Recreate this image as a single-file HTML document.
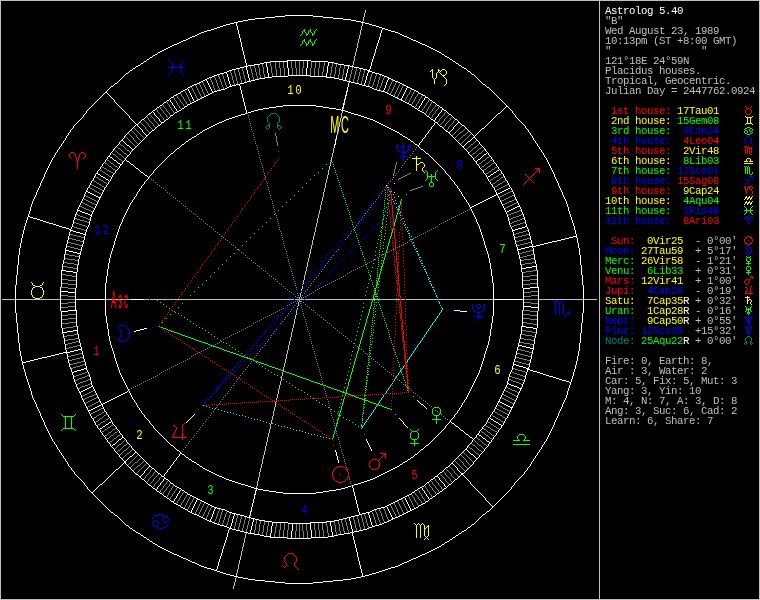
<!DOCTYPE html>
<html lang="en">
<head>
<meta charset="utf-8">
<title>Astrolog 5.40 chart</title>
<style>
html,body{margin:0;padding:0;background:#000;}
#chart{position:relative;width:760px;height:600px;background:#000;overflow:hidden;}
#chart svg{position:absolute;left:0;top:0;display:block;will-change:transform;}
#art path{fill:none;stroke-width:1;shape-rendering:crispEdges;}
.wt{font-family:"Liberation Mono",monospace;}
.hn{font-size:12.5px;letter-spacing:1.8px;text-anchor:middle;}
.ax{font-family:"Liberation Sans",sans-serif;font-size:24.7px;text-anchor:middle;}
#side{position:absolute;left:605px;top:0;width:155px;height:600px;will-change:transform;font-family:"Liberation Mono",monospace;font-size:10.75px;letter-spacing:-0.45px;font-weight:normal;color:#bfbfbf;}
#side div{position:absolute;left:0;height:10px;line-height:10px;white-space:pre;transform-origin:0 0;transform:scale(1,1);}
.c-maroon{color:#7f0000;fill:#7f0000;}
.c-dkgreen{color:#007f00;fill:#007f00;}
.c-orange{color:#7f7f00;fill:#7f7f00;}
.c-dkblue{color:#00007f;fill:#00007f;}
.c-purple{color:#7f007f;fill:#7f007f;}
.c-dkcyan{color:#007f7f;fill:#007f7f;}
.c-ltgray{color:#bfbfbf;fill:#bfbfbf;}
.c-gray{color:#7f7f7f;fill:#7f7f7f;}
.c-red{color:#ff0000;fill:#ff0000;}
.c-green{color:#00ff00;fill:#00ff00;}
.c-yellow{color:#ffff00;fill:#ffff00;}
.c-blue{color:#0000ff;fill:#0000ff;}
.c-magenta{color:#ff00ff;fill:#ff00ff;}
.c-cyan{color:#00ffff;fill:#00ffff;}
.c-white{color:#ffffff;fill:#ffffff;}
</style>
</head>
<body>
<div id="chart">
<svg id="art" width="760" height="600" viewBox="0 0 760 600">
<path transform="translate(0,.5)" stroke="#007f7f" d="M271 113h5M270 114h1M276 114h1M269 115h1M277 115h1M268 116h1M278 116h1M268 122h1M278 122h1M267 125h2M278 125h2M266 126h1M280 126h1M265 127h1M281 127h1M266 128h1M268 128h1M278 128h1M280 128h1M267 129h1M279 129h1M278 151h1M747 336h3M746 337h1M750 337h1M745 342h1M751 342h1M744 343h1M752 343h1M745 344h1M751 344h1"/>
<path transform="translate(.5,0)" stroke="#007f7f" d="M267 117v5M269 123v5M277 123v5M279 117v5M745 338v3M746 341v3M750 341v3M751 338v3"/>
<path transform="translate(0,.5)" stroke="#bfbfbf" d="M1 0h598M600 0h159M362 21h1M352 65h1M347 91h1M346 95h1M345 99h1M344 103h1M344 104h1M343 107h1M343 108h1M342 111h1M342 112h1M336 135h1M336 139h1M334 144h1M331 161h1M302 284h1M301 289h1M301 290h1M301 292h1M299 297h1M299 298h1M2 299h13M16 299h44M106 299h25M144 299h5M150 299h36M187 299h107M295 299h4M300 299h4M305 299h59M365 299h7M373 299h4M378 299h22M401 299h4M406 299h31M439 299h54M539 299h44M584 299h13M299 300h1M299 301h1M297 306h1M297 308h1M297 309h1M276 398h1M276 399h1M276 401h1M256 486h1M256 487h1M255 490h1M254 494h1M251 511h1M250 515h1M246 533h1M236 577h1M1 599h598M600 599h159"/>
<path transform="translate(.5,0)" stroke="#bfbfbf" d="M0 0v600M233 586v3M234 582v4M235 578v4M236 573v3M237 569v4M238 564v5M239 560v4M240 556v4M241 551v5M242 547v4M243 543v4M244 538v5M245 534v4M257 481v5M258 477v4M259 472v5M260 468v4M261 464v4M262 459v5M263 455v4M264 451v4M265 446v5M266 442v4M267 437v5M268 433v4M269 429v4M270 424v5M271 420v4M272 416v4M273 411v5M274 407v4M275 402v5M277 394v4M278 389v5M279 385v4M280 381v4M281 376v5M282 372v4M283 367v4M284 363v4M285 359v4M286 354v5M287 350v4M288 345v5M289 341v4M290 337v4M291 332v5M292 328v4M293 324v4M294 319v5M295 315v4M296 310v5M298 302v4M300 293v4M302 286v3M303 280v4M304 275v5M305 271v4M306 267v4M307 262v5M308 258v4M309 254v4M310 249v5M311 245v4M312 240v5M313 236v4M314 232v4M315 227v5M316 223v4M317 218v5M318 214v4M319 210v4M320 205v5M321 201v4M322 197v4M323 192v5M324 188v4M325 183v5M326 179v4M327 175v4M328 170v5M329 166v4M330 162v4M331 157v3M332 154v3M333 148v5M337 131v4M338 127v4M339 122v5M340 118v4M341 113v5M353 61v4M354 56v5M355 52v4M356 48v4M357 43v5M358 39v4M359 35v4M360 30v5M361 26v4M362 23v3M363 17v4M364 13v4M365 10v3M599 0v600M759 0v600"/>
<path transform="translate(0,.5)" stroke="#7f7f7f" d="M230 71h1M230 72h1M372 73h1M222 74h1M376 74h1M218 75h1M222 75h1M376 75h1M380 75h1M214 76h1M218 76h1M380 76h1M214 77h1M219 77h1M384 77h1M210 78h1M215 78h1M219 78h1M383 78h1M210 79h1M215 79h1M383 79h1M211 80h1M392 80h1M211 81h1M392 81h1M202 82h1M391 82h1M396 82h1M199 83h1M203 83h1M234 83h1M391 83h1M395 83h1M199 84h1M203 84h1M234 84h1M368 84h1M390 84h1M395 84h1M399 84h1M195 85h1M200 85h1M204 85h1M222 85h1M226 85h1M368 85h1M372 85h1M390 85h1M394 85h1M399 85h1M403 85h1M196 86h1M200 86h1M204 86h1M218 86h1M222 86h1M226 86h1M372 86h1M380 86h1M394 86h1M398 86h1M402 86h1M191 87h1M196 87h1M201 87h1M205 87h1M218 87h1M223 87h1M376 87h1M380 87h1M393 87h1M398 87h1M402 87h1M192 88h1M197 88h1M201 88h1M205 88h1M214 88h1M219 88h1M223 88h1M376 88h1M379 88h1M393 88h1M397 88h1M401 88h1M192 89h1M197 89h1M206 89h1M214 89h1M219 89h1M379 89h1M388 89h1M392 89h1M397 89h1M401 89h1M411 89h1M193 90h1M198 90h1M206 90h1M215 90h1M388 90h1M392 90h1M396 90h1M400 90h1M410 90h1M185 91h1M193 91h1M198 91h1M207 91h1M387 91h1M391 91h1M396 91h1M400 91h1M410 91h1M414 91h1M185 92h1M194 92h1M199 92h1M203 92h1M207 92h1M387 92h1M391 92h1M395 92h1M399 92h1M409 92h1M413 92h1M180 93h1M186 93h1M194 93h1M199 93h1M203 93h1M208 93h1M390 93h1M395 93h1M399 93h1M409 93h1M413 93h1M418 93h1M181 94h1M186 94h1M195 94h1M200 94h1M204 94h1M394 94h1M398 94h1M408 94h1M412 94h1M417 94h1M176 95h1M181 95h1M187 95h1M195 95h1M200 95h1M204 95h1M394 95h1M398 95h1M407 95h1M412 95h1M417 95h1M422 95h1M177 96h1M182 96h1M187 96h1M196 96h1M201 96h1M397 96h1M407 96h1M411 96h1M416 96h1M421 96h1M173 97h1M177 97h1M183 97h1M188 97h1M196 97h1M201 97h1M397 97h1M406 97h1M411 97h1M415 97h1M421 97h1M174 98h1M178 98h1M183 98h1M188 98h1M197 98h1M406 98h1M410 98h1M415 98h1M420 98h1M174 99h1M179 99h1M184 99h1M189 99h1M197 99h1M405 99h1M410 99h1M414 99h1M419 99h1M175 100h1M180 100h1M184 100h1M189 100h1M405 100h1M409 100h1M414 100h1M419 100h1M428 100h1M176 101h1M180 101h1M185 101h1M190 101h1M409 101h1M413 101h1M418 101h1M428 101h1M167 102h1M176 102h1M181 102h1M186 102h1M190 102h1M408 102h1M412 102h1M418 102h1M427 102h1M431 102h1M167 103h1M177 103h1M182 103h1M186 103h1M412 103h1M417 103h1M426 103h1M431 103h1M168 104h1M177 104h1M183 104h1M187 104h1M411 104h1M416 104h1M426 104h1M430 104h1M163 105h1M169 105h1M178 105h1M183 105h1M416 105h1M425 105h1M430 105h1M435 105h1M163 106h1M169 106h1M179 106h1M184 106h1M415 106h1M424 106h1M429 106h1M435 106h1M160 107h1M164 107h1M170 107h1M179 107h1M424 107h1M428 107h1M434 107h1M438 107h1M160 108h1M165 108h1M171 108h1M180 108h1M423 108h1M428 108h1M433 108h1M438 108h1M156 109h1M161 109h1M166 109h1M171 109h1M422 109h1M427 109h1M432 109h1M437 109h1M157 110h1M162 110h1M166 110h1M172 110h1M422 110h1M427 110h1M432 110h1M436 110h1M157 111h1M163 111h1M167 111h1M173 111h1M426 111h1M431 111h1M435 111h1M158 112h1M163 112h1M168 112h1M173 112h1M426 112h1M430 112h1M435 112h1M445 112h1M159 113h1M164 113h1M169 113h1M247 113h1M425 113h1M429 113h1M434 113h1M444 113h1M149 114h1M160 114h1M165 114h1M169 114h1M429 114h1M433 114h1M444 114h1M150 115h1M160 115h1M166 115h1M170 115h1M248 115h1M428 115h1M432 115h1M443 115h1M448 115h1M151 116h1M161 116h1M166 116h1M432 116h1M442 116h1M447 116h1M147 117h1M152 117h1M162 117h1M167 117h1M248 117h1M431 117h1M441 117h1M446 117h1M451 117h1M148 118h1M153 118h1M163 118h1M440 118h1M445 118h1M450 118h1M148 119h1M154 119h1M163 119h1M249 119h1M439 119h1M444 119h1M450 119h1M144 120h1M149 120h1M154 120h1M164 120h1M439 120h1M444 120h1M449 120h1M454 120h1M145 121h1M150 121h1M155 121h1M249 121h1M438 121h1M443 121h1M448 121h1M453 121h1M140 122h1M146 122h1M151 122h1M156 122h1M437 122h1M442 122h1M447 122h1M453 122h1M141 123h1M147 123h1M152 123h1M157 123h1M250 123h1M441 123h1M446 123h1M452 123h1M142 124h1M148 124h1M153 124h1M158 124h1M440 124h1M445 124h1M451 124h1M143 125h1M148 125h1M153 125h1M250 125h1M445 125h1M450 125h1M144 126h1M149 126h1M154 126h1M444 126h1M449 126h1M461 126h1M145 127h1M150 127h1M155 127h1M251 127h1M443 127h1M448 127h1M460 127h1M134 128h1M145 128h1M151 128h1M448 128h1M459 128h1M465 128h1M135 129h1M146 129h1M152 129h1M251 129h1M447 129h1M458 129h1M464 129h1M131 130h1M136 130h1M147 130h1M446 130h1M457 130h1M463 130h1M132 131h1M137 131h1M148 131h1M252 131h1M456 131h1M462 131h1M468 131h1M133 132h1M138 132h1M149 132h1M455 132h1M460 132h2M467 132h1M128 133h1M134 133h1M139 133h1M253 133h1M454 133h1M459 133h1M466 133h1M129 134h1M135 134h1M140 134h1M453 134h1M458 134h1M465 134h1M470 134h1M130 135h1M136 135h1M141 135h1M253 135h1M452 135h1M457 135h1M463 135h2M469 135h1M125 136h1M131 136h1M136 136h1M142 136h1M456 136h1M462 136h1M468 136h1M126 137h1M132 137h1M137 137h1M143 137h1M254 137h1M455 137h1M461 137h1M467 137h1M127 138h1M133 138h1M138 138h1M460 138h1M466 138h1M128 139h1M133 139h1M139 139h1M254 139h1M459 139h1M465 139h1M129 140h1M134 140h1M140 140h1M458 140h1M464 140h1M476 140h1M130 141h1M135 141h1M255 141h1M463 141h1M475 141h1M131 142h1M136 142h1M462 142h1M474 142h1M132 143h1M137 143h1M255 143h1M461 143h1M473 143h1M120 144h1M133 144h1M471 144h2M478 144h1M121 145h2M134 145h1M256 145h1M470 145h1M477 145h1M123 146h1M135 146h1M469 146h1M476 146h1M117 147h1M124 147h1M257 147h1M416 147h1M468 147h1M474 147h2M481 147h1M118 148h2M125 148h1M467 148h1M473 148h1M479 148h2M114 149h1M120 149h1M126 149h1M257 149h1M415 149h1M466 149h1M472 149h1M478 149h1M484 149h1M115 150h1M121 150h1M127 150h2M471 150h1M477 150h1M483 150h1M116 151h1M122 151h1M129 151h1M258 151h1M413 151h1M470 151h1M476 151h1M482 151h1M117 152h1M123 152h1M469 152h1M475 152h1M481 152h1M112 153h1M118 153h1M124 153h2M258 153h1M412 153h1M473 153h2M479 153h2M113 154h2M119 154h2M126 154h1M472 154h1M478 154h1M115 155h1M121 155h1M127 155h1M259 155h1M410 155h1M471 155h1M477 155h1M116 156h1M122 156h1M476 156h1M489 156h1M117 157h1M123 157h1M259 157h1M409 157h1M475 157h1M487 157h2M118 158h1M124 158h1M474 158h1M486 158h1M119 159h2M260 159h1M407 159h1M485 159h1M107 160h2M121 160h1M483 160h2M490 160h2M109 161h1M122 161h1M260 161h1M405 161h1M482 161h1M489 161h1M110 162h1M481 162h1M488 162h1M105 163h2M111 163h2M261 163h1M404 163h1M479 163h2M486 163h2M492 163h2M107 164h1M113 164h1M478 164h1M485 164h1M491 164h1M108 165h1M114 165h1M262 165h1M402 165h1M484 165h1M490 165h1M109 166h2M115 166h2M482 166h2M488 166h2M102 167h2M111 167h1M117 167h1M262 167h1M401 167h1M481 167h1M487 167h1M495 167h2M104 168h2M112 168h1M486 168h1M494 168h1M106 169h1M113 169h2M263 169h1M399 169h1M484 169h2M492 169h2M100 170h2M107 170h2M115 170h1M483 170h1M491 170h1M102 171h1M109 171h2M263 171h1M398 171h1M489 171h2M103 172h2M111 172h2M488 172h1M105 173h1M113 173h1M264 173h1M396 173h1M409 173h2M486 173h2M501 173h1M106 174h2M407 174h2M499 174h2M108 175h1M264 175h1M395 175h1M405 175h2M498 175h1M95 176h1M109 176h2M403 176h2M496 176h2M503 176h1M96 177h2M149 177h1M265 177h1M393 177h1M401 177h2M494 177h2M501 177h2M98 178h1M399 178h2M493 178h1M500 178h1M99 179h2M151 179h1M265 179h1M392 179h1M398 179h1M491 179h2M499 179h1M93 180h1M101 180h2M153 180h1M490 180h1M497 180h2M505 180h1M94 181h2M103 181h1M266 181h1M390 181h1M496 181h1M503 181h2M96 182h1M104 182h2M155 182h1M495 182h1M502 182h1M97 183h2M106 183h1M267 183h1M388 183h1M493 183h2M500 183h2M91 184h1M99 184h2M157 184h1M492 184h1M498 184h2M507 184h1M92 185h2M101 185h1M159 185h1M267 185h1M387 185h1M497 185h1M505 185h2M94 186h2M102 186h2M421 186h2M495 186h2M503 186h2M89 187h1M96 187h2M104 187h1M161 187h1M268 187h1M385 187h1M418 187h3M494 187h1M501 187h2M90 188h2M98 188h2M163 188h1M415 188h3M499 188h2M92 189h2M100 189h2M268 189h1M384 189h1M412 189h3M497 189h2M94 190h1M102 190h1M165 190h1M410 190h2M496 190h1M95 191h2M269 191h1M382 191h1M510 191h2M97 192h2M167 192h1M508 192h2M99 193h2M169 193h1M269 193h1M381 193h1M506 193h2M504 194h2M85 195h1M171 195h1M270 195h1M379 195h1M502 195h2M512 195h2M86 196h2M500 196h2M510 196h2M88 197h2M173 197h1M270 197h1M378 197h1M499 197h1M508 197h2M90 198h2M175 198h1M506 198h2M84 199h2M92 199h2M271 199h1M376 199h1M504 199h2M514 199h2M86 200h2M94 200h2M177 200h1M502 200h2M512 200h2M88 201h2M96 201h2M179 201h1M272 201h1M375 201h1M501 201h1M509 201h3M82 202h1M90 202h2M507 202h2M516 202h1M83 203h2M92 203h2M181 203h1M272 203h1M373 203h1M505 203h2M514 203h2M85 204h2M94 204h2M503 204h2M512 204h2M87 205h2M183 205h1M273 205h1M371 205h1M510 205h2M80 206h2M89 206h2M185 206h1M508 206h2M82 207h2M91 207h2M273 207h1M370 207h1M506 207h2M84 208h2M93 208h1M187 208h1M505 208h1M86 209h3M274 209h1M368 209h1M469 209h1M89 210h2M189 210h1M467 210h1M519 210h2M91 211h2M191 211h1M274 211h1M367 211h1M465 211h1M517 211h2M463 212h1M514 212h3M193 213h1M275 213h1M365 213h1M461 213h1M511 213h3M76 214h2M195 214h1M459 214h1M509 214h2M521 214h2M78 215h2M276 215h1M364 215h1M457 215h1M508 215h1M519 215h2M80 216h3M197 216h1M455 216h1M516 216h3M83 217h3M276 217h1M362 217h1M453 217h1M513 217h3M75 218h2M86 218h2M199 218h1M451 218h1M511 218h2M522 218h2M77 219h3M88 219h2M201 219h1M277 219h1M361 219h1M449 219h1M509 219h2M520 219h2M80 220h4M447 220h1M517 220h3M84 221h3M203 221h1M277 221h1M359 221h1M445 221h1M514 221h3M74 222h2M87 222h2M443 222h1M512 222h2M523 222h2M76 223h3M205 223h1M278 223h1M358 223h1M441 223h1M510 223h2M520 223h3M79 224h3M207 224h1M439 224h1M517 224h3M82 225h3M278 225h1M356 225h1M514 225h3M73 226h1M85 226h2M209 226h1M437 226h1M512 226h2M74 227h3M211 227h1M279 227h1M355 227h1M435 227h1M77 228h4M433 228h1M81 229h3M213 229h1M279 229h1M353 229h1M431 229h1M84 230h2M429 230h1M526 230h2M215 231h1M280 231h1M351 231h1M427 231h1M523 231h3M217 232h1M425 232h1M519 232h4M281 233h1M350 233h1M423 233h1M516 233h3M70 234h3M219 234h1M421 234h1M514 234h2M526 234h3M73 235h4M281 235h1M348 235h1M419 235h1M522 235h4M77 236h4M221 236h1M417 236h1M518 236h4M81 237h3M223 237h1M282 237h1M347 237h1M415 237h1M515 237h3M69 238h3M413 238h1M527 238h3M72 239h4M225 239h1M282 239h1M345 239h1M411 239h1M523 239h4M76 240h4M227 240h1M409 240h1M519 240h4M80 241h3M283 241h1M516 241h3M68 242h3M229 242h1M407 242h1M528 242h3M71 243h4M283 243h1M405 243h1M524 243h4M75 244h4M231 244h1M403 244h1M520 244h4M79 245h3M233 245h1M284 245h1M401 245h1M517 245h3M67 246h3M399 246h1M70 247h4M235 247h1M284 247h1M397 247h1M74 248h4M78 249h3M237 249h1M285 249h1M338 249h1M393 249h1M239 250h1M391 250h1M530 250h3M286 251h1M336 251h1M389 251h1M526 251h4M241 252h1M387 252h1M522 252h4M243 253h1M286 253h1M519 253h3M65 254h4M383 254h1M531 254h3M69 255h6M245 255h1M287 255h1M333 255h1M381 255h1M527 255h4M75 256h4M523 256h4M247 257h1M287 257h1M331 257h1M377 257h1M520 257h3M65 258h3M249 258h1M531 258h3M68 259h7M288 259h1M330 259h1M375 259h1M524 259h7M75 260h3M251 260h1M373 260h1M521 260h3M288 261h1M328 261h1M371 261h1M64 262h3M253 262h1M369 262h1M532 262h3M67 263h7M255 263h1M289 263h1M327 263h1M367 263h1M525 263h7M74 264h4M365 264h1M521 264h4M257 265h1M289 265h1M325 265h1M363 265h1M63 266h4M259 266h1M361 266h1M67 267h6M290 267h1M324 267h1M359 267h1M73 268h4M261 268h1M357 268h1M291 269h1M322 269h1M355 269h1M263 270h1M353 270h1M533 270h4M265 271h1M291 271h1M321 271h1M351 271h1M526 271h7M349 272h1M523 272h3M267 273h1M292 273h1M319 273h1M347 273h1M62 274h4M66 275h6M269 275h1M292 275h1M318 275h1M345 275h1M530 275h7M72 276h4M271 276h1M343 276h1M523 276h7M293 277h1M316 277h1M341 277h1M273 278h1M339 278h1M62 279h6M275 279h1M293 279h1M314 279h1M337 279h1M530 279h7M68 280h8M335 280h1M523 280h7M277 281h1M294 281h1M313 281h1M333 281h1M331 282h1M62 283h6M279 283h1M295 283h1M311 283h1M329 283h1M530 283h7M68 284h8M281 284h1M327 284h1M523 284h7M295 285h1M310 285h1M325 285h1M283 286h1M323 286h1M61 287h7M296 287h1M308 287h1M321 287h1M68 288h7M285 288h1M319 288h1M287 289h1M296 289h1M307 289h1M317 289h1M315 290h1M289 291h1M305 291h1M531 291h7M291 292h1M313 292h1M524 292h7M297 293h1M304 293h1M311 293h1M293 294h1M309 294h1M61 295h7M298 295h1M302 295h1M307 295h1M531 295h7M68 296h7M295 296h1M305 296h1M524 296h7M297 297h2M301 297h1M303 297h1M301 298h1M61 299h14M299 299h1M524 299h14M297 300h1M295 301h1M297 301h1M300 301h2M68 302h7M293 302h1M303 302h1M524 302h7M61 303h7M291 303h1M296 303h1M300 303h1M531 303h7M289 304h1M305 304h1M287 305h1M294 305h1M301 305h1M68 306h7M307 306h1M61 307h7M293 307h1M301 307h1M309 307h1M283 308h1M281 309h1M291 309h1M302 309h1M311 309h1M279 310h1M313 310h1M523 310h7M277 311h1M290 311h1M302 311h1M530 311h7M275 312h1M315 312h1M273 313h1M288 313h1M303 313h1M68 314h8M271 314h1M317 314h1M523 314h7M62 315h6M269 315h1M287 315h1M303 315h1M319 315h1M530 315h7M267 316h1M265 317h1M285 317h1M304 317h1M321 317h1M68 318h8M263 318h1M523 318h7M62 319h6M261 319h1M284 319h1M305 319h1M323 319h1M530 319h7M259 320h1M325 320h1M257 321h1M282 321h1M305 321h1M69 322h7M255 322h1M327 322h1M523 322h4M62 323h7M253 323h1M280 323h1M306 323h1M329 323h1M527 323h6M533 324h4M251 325h1M306 325h1M331 325h1M73 326h4M249 326h1M66 327h7M247 327h1M307 327h1M333 327h1M63 328h3M245 328h1M335 328h1M243 329h1M276 329h1M307 329h1M241 330h1M337 330h1M522 330h4M239 331h1M274 331h1M308 331h1M526 331h6M237 332h1M339 332h1M532 332h4M235 333h1M273 333h1M309 333h1M341 333h1M74 334h4M233 334h1M521 334h4M67 335h7M231 335h1M271 335h1M309 335h1M343 335h1M525 335h7M64 336h3M229 336h1M345 336h1M532 336h3M227 337h1M270 337h1M310 337h1M75 338h3M225 338h1M347 338h1M521 338h3M68 339h7M223 339h1M268 339h1M310 339h1M524 339h7M65 340h3M349 340h1M531 340h3M76 341h3M221 341h1M267 341h1M311 341h1M351 341h1M72 342h4M219 342h1M520 342h4M68 343h4M217 343h1M265 343h1M311 343h1M353 343h1M524 343h6M66 344h2M215 344h1M530 344h3M77 345h3M213 345h1M264 345h1M312 345h1M355 345h1M73 346h4M211 346h1M357 346h1M69 347h4M209 347h1M262 347h1M312 347h1M66 348h3M207 348h1M359 348h1M205 349h1M260 349h1M313 349h1M361 349h1M518 349h3M203 350h1M521 350h4M201 351h1M259 351h1M314 351h1M363 351h1M525 351h4M199 352h1M529 352h3M79 353h3M197 353h1M257 353h1M314 353h1M365 353h1M517 353h3M75 354h4M195 354h1M367 354h1M520 354h4M71 355h4M193 355h1M256 355h1M315 355h1M524 355h4M68 356h3M191 356h1M369 356h1M528 356h3M80 357h3M254 357h1M315 357h1M516 357h3M76 358h4M189 358h1M371 358h1M519 358h4M72 359h4M187 359h1M253 359h1M316 359h1M373 359h1M523 359h4M69 360h3M185 360h1M527 360h3M81 361h3M183 361h1M251 361h1M316 361h1M375 361h1M515 361h3M77 362h4M181 362h1M377 362h1M518 362h4M73 363h4M179 363h1M250 363h1M317 363h1M522 363h4M70 364h3M83 364h2M177 364h1M379 364h1M526 364h3M80 365h3M175 365h1M248 365h1M317 365h1M76 366h4M173 366h1M381 366h1M73 367h3M171 367h1M247 367h1M318 367h1M383 367h1M71 368h2M169 368h1M513 368h2M167 369h1M245 369h1M319 369h1M385 369h1M515 369h3M165 370h1M518 370h4M163 371h1M243 371h1M319 371h1M387 371h1M522 371h3M85 372h2M161 372h1M389 372h1M512 372h2M525 372h1M82 373h3M242 373h1M320 373h1M514 373h3M79 374h3M159 374h1M391 374h1M517 374h3M76 375h3M87 375h2M157 375h1M240 375h1M320 375h1M393 375h1M520 375h3M74 376h2M85 376h2M155 376h1M510 376h2M523 376h2M82 377h3M153 377h1M239 377h1M321 377h1M395 377h1M512 377h3M79 378h3M151 378h1M515 378h4M77 379h2M88 379h2M149 379h1M237 379h1M321 379h1M397 379h1M509 379h2M519 379h3M75 380h2M86 380h2M147 380h1M399 380h1M511 380h2M522 380h2M83 381h3M145 381h1M236 381h1M322 381h1M513 381h3M80 382h3M143 382h1M401 382h1M516 382h3M78 383h2M90 383h1M141 383h1M234 383h1M322 383h1M519 383h2M77 384h1M88 384h2M139 384h1M403 384h1M521 384h1M85 385h3M137 385h1M233 385h1M405 385h1M82 386h3M135 386h1M80 387h2M133 387h1M231 387h1M324 387h1M407 387h1M506 387h2M78 388h2M131 388h1M409 388h1M508 388h2M129 389h1M230 389h1M324 389h1M510 389h2M93 390h1M411 390h1M505 390h1M512 390h3M91 391h2M228 391h1M325 391h1M506 391h2M515 391h2M89 392h2M413 392h1M508 392h2M517 392h2M87 393h2M227 393h1M325 393h1M415 393h1M510 393h2M85 394h2M94 394h2M503 394h1M512 394h2M83 395h2M92 395h2M225 395h1M326 395h1M417 395h1M504 395h2M514 395h2M82 396h1M89 396h3M506 396h2M516 396h1M87 397h2M96 397h2M223 397h1M419 397h1M501 397h1M508 397h2M85 398h2M94 398h2M421 398h1M502 398h2M510 398h2M83 399h2M92 399h2M222 399h1M327 399h1M504 399h2M512 399h2M90 400h2M423 400h1M506 400h2M514 400h1M88 401h2M98 401h2M220 401h1M328 401h1M425 401h1M508 401h2M86 402h2M96 402h2M510 402h2M85 403h1M94 403h2M219 403h1M328 403h1M427 403h1M512 403h2M92 404h2M90 405h2M217 405h1M329 405h1M429 405h1M498 405h2M88 406h2M431 406h1M500 406h2M87 407h1M216 407h1M329 407h1M502 407h1M101 408h2M496 408h1M503 408h2M99 409h2M214 409h1M330 409h1M497 409h2M505 409h2M97 410h2M435 410h1M499 410h2M507 410h2M95 411h2M104 411h1M213 411h1M330 411h1M437 411h1M494 411h1M501 411h2M509 411h1M93 412h2M102 412h2M495 412h2M503 412h2M91 413h2M101 413h1M211 413h1M331 413h1M439 413h1M497 413h1M505 413h2M99 414h2M106 414h1M441 414h1M498 414h2M507 414h1M97 415h2M104 415h2M210 415h1M331 415h1M492 415h1M500 415h2M96 416h1M103 416h1M443 416h1M493 416h2M502 416h1M94 417h2M102 417h1M208 417h1M332 417h1M495 417h1M503 417h2M93 418h1M100 418h2M108 418h1M445 418h1M496 418h2M505 418h1M99 419h1M106 419h2M206 419h1M333 419h1M447 419h1M498 419h2M98 420h1M105 420h1M500 420h1M96 421h2M103 421h2M205 421h1M333 421h1M449 421h1M501 421h2M95 422h1M101 422h2M488 422h2M503 422h1M100 423h1M203 423h1M334 423h1M490 423h1M98 424h2M491 424h2M97 425h1M111 425h2M202 425h1M334 425h1M485 425h1M493 425h1M110 426h1M486 426h2M494 426h2M108 427h2M200 427h1M488 427h2M496 427h1M107 428h1M115 428h1M483 428h1M490 428h1M497 428h2M105 429h2M113 429h2M199 429h1M484 429h2M491 429h2M104 430h1M112 430h1M486 430h1M493 430h2M102 431h2M111 431h1M117 431h1M197 431h1M336 431h1M481 431h1M487 431h1M495 431h2M109 432h2M115 432h2M482 432h2M488 432h2M108 433h1M114 433h1M196 433h1M336 433h1M484 433h1M490 433h1M107 434h1M113 434h1M120 434h1M485 434h1M491 434h1M105 435h2M111 435h2M118 435h2M194 435h1M337 435h1M486 435h2M492 435h2M110 436h1M117 436h1M488 436h1M109 437h1M116 437h1M193 437h1M338 437h1M476 437h1M489 437h1M107 438h2M114 438h2M477 438h1M490 438h2M113 439h1M191 439h1M338 439h1M478 439h2M112 440h1M124 440h1M474 440h1M480 440h1M110 441h2M123 441h1M189 441h1M339 441h1M475 441h1M481 441h1M109 442h1M122 442h1M476 442h1M482 442h1M121 443h1M127 443h1M188 443h1M339 443h1M471 443h1M477 443h1M483 443h1M119 444h2M126 444h1M472 444h1M478 444h1M484 444h2M118 445h1M124 445h2M186 445h1M340 445h1M473 445h2M479 445h2M486 445h1M117 446h1M123 446h1M129 446h1M468 446h1M475 446h1M481 446h1M116 447h1M122 447h1M128 447h1M185 447h1M340 447h1M469 447h1M476 447h1M482 447h1M115 448h1M121 448h1M127 448h1M470 448h2M477 448h1M483 448h1M120 449h1M126 449h1M132 449h1M183 449h1M341 449h1M472 449h1M478 449h1M118 450h2M124 450h2M131 450h1M473 450h1M479 450h2M117 451h1M123 451h1M130 451h1M182 451h1M341 451h1M474 451h1M481 451h1M122 452h1M129 452h1M463 452h1M475 452h1M121 453h1M127 453h2M342 453h1M464 453h1M476 453h2M120 454h1M126 454h1M465 454h1M478 454h1M125 455h1M137 455h1M343 455h1M461 455h1M466 455h1M124 456h1M136 456h1M462 456h1M467 456h1M123 457h1M135 457h1M343 457h1M463 457h1M468 457h1M122 458h1M134 458h1M140 458h1M458 458h1M464 458h1M469 458h1M133 459h1M139 459h1M344 459h1M459 459h1M465 459h1M470 459h1M132 460h1M138 460h1M460 460h1M466 460h1M471 460h1M131 461h1M137 461h1M143 461h1M344 461h1M455 461h1M461 461h1M466 461h1M472 461h1M130 462h1M135 462h2M142 462h1M456 462h1M462 462h1M467 462h1M129 463h1M134 463h1M141 463h1M146 463h1M345 463h1M457 463h1M463 463h1M468 463h1M128 464h1M133 464h1M140 464h1M145 464h1M458 464h1M463 464h1M469 464h1M132 465h1M138 465h2M144 465h1M345 465h1M459 465h1M464 465h1M470 465h1M131 466h1M137 466h1M143 466h1M449 466h1M460 466h1M465 466h1M130 467h1M136 467h1M142 467h1M346 467h1M450 467h1M461 467h1M466 467h1M135 468h1M141 468h1M451 468h1M462 468h1M467 468h1M134 469h1M140 469h1M151 469h1M347 469h1M446 469h1M452 469h1M463 469h1M133 470h1M139 470h1M150 470h1M447 470h1M453 470h1M464 470h1M138 471h1M150 471h1M155 471h1M443 471h1M448 471h1M454 471h1M137 472h1M149 472h1M154 472h1M444 472h1M449 472h1M454 472h1M136 473h1M148 473h1M153 473h1M445 473h1M450 473h1M455 473h1M147 474h1M153 474h1M158 474h1M440 474h1M445 474h1M451 474h1M456 474h1M146 475h1M152 475h1M157 475h1M441 475h1M446 475h1M451 475h1M457 475h1M145 476h1M151 476h1M156 476h1M161 476h1M442 476h1M447 476h1M452 476h1M458 476h1M145 477h1M150 477h1M155 477h1M160 477h1M349 477h1M443 477h1M448 477h1M453 477h1M144 478h1M149 478h1M154 478h1M159 478h1M434 478h1M444 478h1M449 478h1M454 478h1M148 479h1M153 479h1M159 479h1M349 479h1M435 479h1M445 479h1M450 479h1M148 480h1M153 480h1M158 480h1M435 480h1M445 480h1M450 480h1M147 481h1M152 481h1M157 481h1M167 481h1M350 481h1M431 481h1M436 481h1M446 481h1M451 481h1M151 482h1M156 482h1M166 482h1M432 482h1M437 482h1M447 482h1M150 483h1M155 483h1M166 483h1M170 483h1M350 483h1M428 483h1M432 483h1M438 483h1M448 483h1M149 484h1M154 484h1M165 484h1M169 484h1M429 484h1M433 484h1M438 484h1M154 485h1M164 485h1M169 485h1M173 485h1M351 485h1M429 485h1M434 485h1M439 485h1M153 486h1M163 486h1M168 486h1M172 486h1M425 486h1M430 486h1M435 486h1M440 486h1M163 487h1M167 487h1M172 487h1M425 487h1M431 487h1M435 487h1M441 487h1M162 488h1M166 488h1M171 488h1M176 488h1M426 488h1M432 488h1M436 488h1M441 488h1M161 489h1M166 489h1M171 489h1M176 489h1M427 489h1M432 489h1M437 489h1M442 489h1M160 490h1M165 490h1M170 490h1M175 490h1M418 490h1M427 490h1M433 490h1M438 490h1M160 491h1M164 491h1M169 491h1M174 491h1M419 491h1M428 491h1M434 491h1M438 491h1M163 492h1M169 492h1M174 492h1M183 492h1M414 492h1M419 492h1M429 492h1M435 492h1M163 493h1M168 493h1M173 493h1M182 493h1M415 493h1M420 493h1M429 493h1M435 493h1M168 494h1M172 494h1M182 494h1M187 494h1M411 494h1M415 494h1M421 494h1M430 494h1M167 495h1M172 495h1M181 495h1M186 495h1M412 495h1M416 495h1M421 495h1M431 495h1M167 496h1M171 496h1M180 496h1M186 496h1M190 496h1M408 496h1M412 496h1M417 496h1M422 496h1M431 496h1M170 497h1M180 497h1M185 497h1M189 497h1M409 497h1M413 497h1M418 497h1M422 497h1M170 498h1M179 498h1M184 498h1M189 498h1M193 498h1M409 498h1M414 498h1M418 498h1M423 498h1M179 499h1M184 499h1M188 499h1M193 499h1M401 499h1M410 499h1M414 499h1M419 499h1M424 499h1M178 500h1M183 500h1M188 500h1M192 500h1M402 500h1M410 500h1M415 500h1M420 500h1M424 500h1M177 501h1M183 501h1M187 501h1M192 501h1M201 501h1M397 501h1M402 501h1M411 501h1M415 501h1M421 501h1M425 501h1M177 502h1M182 502h1M187 502h1M191 502h1M200 502h1M398 502h1M403 502h1M411 502h1M416 502h1M421 502h1M176 503h1M181 503h1M186 503h1M190 503h1M200 503h1M204 503h1M394 503h1M398 503h1M403 503h1M412 503h1M417 503h1M422 503h1M181 504h1M186 504h1M190 504h1M199 504h1M203 504h1M394 504h1M399 504h1M404 504h1M412 504h1M417 504h1M180 505h1M185 505h1M189 505h1M199 505h1M203 505h1M208 505h1M390 505h1M395 505h1M399 505h1M404 505h1M413 505h1M418 505h1M185 506h1M189 506h1M198 506h1M202 506h1M207 506h1M211 506h1M391 506h1M395 506h1M400 506h1M405 506h1M413 506h1M184 507h1M188 507h1M198 507h1M202 507h1M207 507h1M211 507h1M391 507h1M396 507h1M400 507h1M405 507h1M414 507h1M188 508h1M197 508h1M201 508h1M206 508h1M210 508h1M383 508h1M392 508h1M396 508h1M401 508h1M406 508h1M187 509h1M197 509h1M201 509h1M206 509h1M210 509h1M219 509h1M379 509h1M384 509h1M392 509h1M401 509h1M406 509h1M196 510h1M200 510h1M205 510h1M209 510h1M219 510h1M222 510h1M375 510h1M379 510h1M384 510h1M393 510h1M402 510h1M407 510h1M196 511h1M200 511h1M205 511h1M209 511h1M218 511h1M222 511h1M375 511h1M380 511h1M393 511h1M402 511h1M407 511h1M195 512h1M199 512h1M204 512h1M218 512h1M226 512h1M372 512h1M376 512h1M380 512h1M394 512h1M398 512h1M403 512h1M195 513h1M199 513h1M204 513h1M226 513h1M230 513h1M372 513h1M376 513h1M394 513h1M398 513h1M403 513h1M198 514h1M203 514h1M230 514h1M364 514h1M395 514h1M399 514h1M203 515h1M207 515h1M364 515h1M395 515h1M399 515h1M202 516h1M207 516h1M396 516h1M206 517h1M387 517h1M206 518h1M387 518h1M215 519h1M383 519h1M388 519h1M215 520h1M379 520h1M383 520h1M388 520h1M214 521h1M379 521h1M384 521h1M214 522h1M218 522h1M380 522h1M218 523h1M222 523h1M376 523h1M380 523h1M222 524h1M376 524h1M226 525h1M368 526h1M368 527h1M344 531h1M344 532h1"/>
<path transform="translate(.5,0)" stroke="#7f7f7f" d="M202 89v3M208 512v3M212 82v3M213 85v3M216 80v3M216 516v3M217 83v3M217 513v3M219 519v3M220 79v3M220 515v4M221 82v3M221 512v3M223 76v3M223 520v3M224 79v3M224 517v3M225 82v3M225 514v3M227 522v3M228 518v4M229 515v3M231 73v3M232 76v4M233 80v3M234 70v3M234 526v3M235 73v4M235 522v4M236 77v4M236 518v4M237 81v3M237 515v3M238 69v3M238 527v3M239 72v4M239 523v4M240 76v4M240 519v4M241 80v3M241 516v3M242 68v3M242 528v3M243 71v4M243 524v4M244 75v4M244 520v4M245 79v3M245 517v3M246 529v3M247 525v4M248 521v4M249 518v3M250 66v3M251 69v4M252 73v4M253 77v3M254 65v3M254 530v4M255 68v4M255 524v6M256 72v4M256 520v4M257 76v3M258 65v3M258 531v3M259 68v7M259 524v7M260 75v3M260 521v3M262 64v3M262 532v3M263 67v7M263 525v7M264 74v4M264 521v4M266 532v4M267 526v6M268 522v4M270 62v4M271 66v7M272 73v3M274 533v4M275 62v7M275 133v3M275 527v6M276 69v7M276 136v6M276 523v4M277 142v4M279 62v6M279 530v7M280 68v8M280 523v7M283 62v6M283 530v7M284 68v8M284 523v7M287 530v8M288 524v6M291 61v7M292 68v7M295 61v7M295 531v7M296 68v7M296 524v7M299 61v14M299 524v14M302 68v7M302 524v7M303 61v7M303 531v7M306 524v7M307 531v7M310 68v8M311 62v6M314 68v8M314 523v7M315 62v6M315 530v7M318 68v8M318 523v7M319 62v6M319 530v7M322 72v4M322 523v7M323 66v6M323 530v7M324 62v4M326 522v4M327 526v7M328 533v3M330 73v4M331 67v6M332 63v4M334 74v4M334 521v4M335 67v7M335 525v7M336 64v3M336 532v3M338 75v3M338 521v3M339 68v7M339 524v7M340 65v3M340 531v3M341 520v3M342 75v4M342 523v4M343 69v6M343 527v4M344 66v3M345 519v3M346 522v4M347 526v4M348 530v3M349 78v3M350 74v4M351 70v4M352 67v3M353 79v3M353 517v3M354 75v4M354 520v4M355 71v4M355 524v4M356 68v3M356 528v3M357 80v3M357 516v3M358 76v4M358 519v4M359 72v4M359 523v4M360 69v3M360 527v3M361 81v3M361 515v3M362 77v4M362 518v4M363 73v4M363 522v4M364 70v3M364 526v3M365 516v3M366 519v4M367 523v3M369 81v3M370 77v4M371 74v3M373 82v3M373 514v3M374 79v3M374 517v3M375 76v3M375 520v3M377 84v3M377 514v3M378 80v4M378 517v3M379 77v3M381 83v3M381 513v3M382 80v3M382 516v3M385 511v3M386 514v3M389 86v3M393 173v3M394 169v4M395 165v4M396 162v3M397 509v3"/>
<path transform="translate(0,.5)" stroke="#ff0000" d="M745 106h1M751 106h1M746 107h1M750 107h1M747 108h3M746 109h1M750 109h1M746 113h1M750 113h1M747 114h3M744 146h1M746 146h1M748 146h1M750 148h1M71 152h3M81 152h3M70 153h1M74 153h1M80 153h1M84 153h1M750 153h1M749 154h1M751 154h1M70 157h1M84 157h1M71 158h1M83 158h1M278 158h1M277 160h1M275 162h1M274 164h1M273 166h1M271 168h1M535 168h4M538 169h1M270 170h1M537 170h1M536 171h1M268 172h1M535 172h1M534 173h1M267 174h1M525 174h1M533 174h1M526 175h1M532 175h1M265 176h1M527 176h1M531 176h1M528 177h1M530 177h1M264 178h1M529 178h1M528 179h1M530 179h1M263 180h1M527 180h1M531 180h1M526 181h1M532 181h1M261 182h1M525 182h1M533 182h1M524 183h1M260 184h1M523 184h1M258 186h1M386 186h1M748 186h1M750 186h2M744 187h1M748 187h2M752 187h1M257 188h1M386 188h1M749 188h1M752 188h1M750 189h2M255 190h1M387 190h1M751 190h1M254 192h1M387 192h1M253 194h1M387 194h1M751 194h1M251 196h1M387 196h1M250 198h1M387 198h1M248 200h1M388 200h1M247 202h1M388 202h1M401 202h1M401 203h1M245 204h1M388 204h1M401 205h1M244 206h1M401 206h1M242 208h1M388 208h1M401 208h1M401 209h1M241 210h1M389 210h1M400 211h1M240 212h1M389 212h1M401 212h1M238 214h1M389 214h1M400 214h1M402 215h1M237 216h1M389 216h1M400 217h1M235 218h1M390 218h1M402 218h1M234 220h1M390 220h1M400 220h1M402 221h1M232 222h1M390 222h1M400 223h1M231 224h1M390 224h1M402 224h1M230 226h1M390 226h1M400 226h1M402 227h1M228 228h1M391 228h1M400 229h1M227 230h1M391 230h1M402 230h1M225 232h1M391 232h1M399 232h1M402 233h1M224 234h1M399 235h1M222 236h1M391 236h1M402 236h1M747 236h3M745 237h2M750 237h2M221 238h1M392 238h1M399 238h1M745 238h1M751 238h1M402 239h1M220 240h1M392 240h1M748 240h1M399 241h1M218 242h1M392 242h1M403 242h1M745 242h1M751 242h1M745 243h2M750 243h2M217 244h1M392 244h1M399 244h1M747 244h3M403 245h1M215 246h1M392 246h1M399 247h1M214 248h1M393 248h1M403 248h1M212 250h1M393 250h1M399 250h1M403 251h1M211 252h1M393 252h1M398 253h1M210 254h1M393 254h1M403 254h1M208 256h1M394 256h1M398 256h1M403 257h1M207 258h1M394 258h1M398 259h1M205 260h1M394 260h1M403 260h1M204 262h1M394 262h1M398 262h1M403 263h1M202 264h1M394 264h1M398 265h1M201 266h1M395 266h1M403 266h1M200 268h1M395 268h1M398 268h1M404 269h1M198 270h1M395 270h1M398 271h1M197 272h1M395 272h1M404 272h1M195 274h1M395 274h1M397 274h1M404 275h1M194 276h1M396 276h1M750 276h2M397 277h1M751 277h1M192 278h1M396 278h1M404 278h1M750 278h1M746 279h2M749 279h1M191 280h1M396 280h2M745 280h1M748 280h1M404 281h1M744 281h1M749 281h1M190 282h1M396 282h1M744 282h1M749 282h1M397 283h1M745 283h1M748 283h1M188 284h1M397 284h1M404 284h1M746 284h2M187 286h1M397 286h1M751 286h1M404 287h1M745 287h2M185 288h1M747 288h1M747 289h1M184 290h1M404 290h1M746 290h1M746 291h1M182 292h1M397 292h1M745 292h1M404 293h1M745 293h5M751 293h2M181 294h1M398 294h1M396 295h1M179 296h1M398 296h1M405 296h1M178 298h1M396 298h1M398 298h1M149 299h1M405 299h1M177 300h1M398 300h1M396 301h1M175 302h1M398 302h1M405 302h1M174 304h1M396 304h1M399 304h1M405 305h1M172 306h1M399 306h1M396 307h1M171 308h1M399 308h1M405 308h1M169 310h1M396 310h1M399 310h1M405 311h1M168 312h1M399 312h1M396 313h1M167 314h1M400 314h1M405 314h1M165 316h1M395 316h1M400 316h1M405 317h1M164 318h1M400 318h1M395 319h1M162 320h1M400 320h1M405 320h1M161 322h1M395 322h1M401 322h1M405 323h1M159 324h1M401 324h1M395 325h1M158 326h1M401 326h1M406 326h1M160 327h1M395 328h1M401 328h1M162 329h1M406 329h1M164 330h1M401 330h1M166 331h1M395 331h1M168 332h1M402 332h1M406 332h1M170 334h1M395 334h1M402 334h1M172 335h1M406 335h1M174 336h1M402 336h1M394 337h1M176 338h1M402 338h1M406 338h1M178 339h1M180 340h1M394 340h1M402 340h1M406 341h1M182 342h1M403 342h1M184 343h1M394 343h1M186 344h1M403 344h1M406 344h1M188 345h1M394 346h1M403 346h1M190 347h1M406 347h1M192 348h1M403 348h1M194 349h1M394 349h1M406 350h1M196 351h1M198 352h1M394 352h1M200 353h1M407 353h1M404 354h1M202 355h1M394 355h1M204 356h1M404 356h1M407 356h1M206 357h1M208 358h1M393 358h1M404 358h1M407 359h1M210 360h1M212 361h1M393 361h1M214 362h1M407 362h1M216 364h1M393 364h1M218 365h1M407 365h1M220 366h1M405 366h1M393 367h1M222 368h1M405 368h1M407 368h1M224 369h1M226 370h1M393 370h1M228 371h1M407 371h1M230 373h1M393 373h1M232 374h1M234 375h1M393 376h1M406 376h1M236 377h1M238 378h1M240 379h1M392 379h1M408 380h1M242 381h1M244 382h1M392 382h1M246 383h1M408 383h1M248 384h1M392 385h1M250 386h1M252 387h1M254 388h1M392 388h1M256 390h1M258 391h1M392 391h1M260 392h1M402 392h1M404 392h1M406 392h1M386 393h1M388 393h1M390 393h1M392 393h1M394 393h1M396 393h1M398 393h1M400 393h1M262 394h1M370 394h1M372 394h1M374 394h1M376 394h1M378 394h1M380 394h1M382 394h1M384 394h1M392 394h1M264 395h1M354 395h1M356 395h1M358 395h1M360 395h1M362 395h1M364 395h1M366 395h1M368 395h1M266 396h1M338 396h1M340 396h1M342 396h1M344 396h1M346 396h1M348 396h1M350 396h1M352 396h1M268 397h1M322 397h1M324 397h1M326 397h1M328 397h1M330 397h1M332 397h1M334 397h1M336 397h1M392 397h1M306 398h1M308 398h1M310 398h1M312 398h1M314 398h1M316 398h1M318 398h1M320 398h1M270 399h1M290 399h1M292 399h1M294 399h1M296 399h1M298 399h1M300 399h1M302 399h1M304 399h1M272 400h1M274 400h1M276 400h1M278 400h1M280 400h1M282 400h1M284 400h1M286 400h1M288 400h1M391 400h1M258 401h1M260 401h1M262 401h1M264 401h1M266 401h1M268 401h1M270 401h1M272 401h1M274 401h1M242 402h1M244 402h1M246 402h1M248 402h1M250 402h1M252 402h1M254 402h1M256 402h1M226 403h1M228 403h1M230 403h1M232 403h1M234 403h1M236 403h1M238 403h1M240 403h1M276 403h1M391 403h1M210 404h1M212 404h1M214 404h1M216 404h1M218 404h1M220 404h1M222 404h1M224 404h1M278 404h1M202 405h1M204 405h1M206 405h1M208 405h1M280 405h1M391 406h1M282 407h1M284 408h1M198 409h1M286 409h1M288 410h1M290 412h1M292 413h1M294 414h1M296 416h1M298 417h1M300 418h1M302 420h1M304 421h1M306 422h1M184 423h1M308 423h1M183 424h1M173 425h2M310 425h1M175 426h1M312 426h1M314 427h1M316 429h1M175 430h1M318 430h1M175 431h1M320 431h1M174 432h1M174 433h1M322 433h1M173 434h1M324 434h1M364 434h1M173 435h1M326 435h1M172 436h1M328 436h1M172 437h10M183 437h4M330 438h1M332 439h1M333 445h1M380 453h5M384 454h1M383 455h1M382 456h1M381 457h1M380 458h1M372 459h5M379 459h1M371 460h1M377 460h2M370 461h1M378 461h1M338 466h5M336 467h2M343 467h2M370 467h1M378 467h1M335 468h1M345 468h1M371 468h1M377 468h1M334 469h1M346 469h1M372 469h5M333 470h1M347 470h1M333 471h1M347 471h1M340 474h1M333 477h1M347 477h1M333 478h1M347 478h1M334 479h1M346 479h1M335 480h1M345 480h1M336 481h2M343 481h2M338 482h5M288 553h5M287 554h1M293 554h1M286 555h1M294 555h1M285 556h1M295 556h1M285 562h1M295 562h1M282 565h1M283 566h1M285 566h1M295 566h1M284 567h1M296 567h1M297 568h1M298 569h1"/>
<path transform="translate(.5,0)" stroke="#ff0000" d="M69 154v3M75 154v3M76 157v4M77 161v8M78 157v4M79 154v3M85 154v3M176 427v3M182 425v15M284 557v5M286 563v3M294 563v3M296 557v5M332 472v5M348 472v5M369 462v5M379 462v5M385 453v6M390 188v6M391 194v11M392 205v12M393 217v11M394 228v11M395 239v12M396 251v11M397 262v11M397 288v3M398 273v12M399 285v11M400 296v11M401 307v12M402 319v11M403 330v11M404 341v12M405 353v12M406 364v11M407 374v13M408 386v7M539 168v5M744 239v3M745 110v3M745 147v7M745 186v5M746 191v3M747 147v7M747 188v3M749 147v6M750 287v8M751 110v3M751 147v6M752 191v3M752 239v3M752 276v3"/>
<path transform="translate(0,.5)" stroke="#00ff00" d="M316 29h1M303 30h1M309 30h1M315 30h1M305 32h1M311 32h1M301 34h1M307 34h1M313 34h1M300 35h1M316 39h1M303 40h1M309 40h1M315 40h1M305 42h1M311 42h1M301 44h1M307 44h1M313 44h1M300 45h1M747 127h3M745 128h2M750 128h2M744 129h1M749 129h1M752 129h1M745 130h2M749 130h1M752 130h1M744 131h1M747 131h1M750 131h2M744 132h1M747 132h1M752 132h1M745 133h2M750 133h2M747 134h3M330 160h2M332 162h1M326 164h1M333 164h1M333 166h1M744 166h1M746 166h1M748 166h1M322 168h1M334 168h1M335 170h1M425 170h1M437 170h1M426 171h1M436 171h1M318 172h1M335 172h1M752 172h1M752 173h1M336 174h1M750 174h2M314 175h1M337 176h1M428 176h3M432 176h3M337 178h1M310 179h1M426 179h1M436 179h1M338 180h1M425 180h1M437 180h1M339 182h1M430 182h1M432 182h1M306 183h1M339 184h1M340 186h1M430 186h3M302 187h1M341 188h1M341 190h1M385 190h1M298 191h1M389 191h1M342 192h1M385 192h1M343 194h1M385 194h1M389 194h1M406 194h1M294 195h1M388 195h1M343 196h1M385 196h1M389 197h1M344 198h1M385 198h1M290 199h1M387 199h1M401 199h1M345 200h1M384 200h1M389 200h1M401 200h1M286 202h1M345 202h1M384 202h1M387 203h2M346 204h1M384 204h1M282 206h1M347 206h1M384 206h1M388 206h1M744 206h1M752 206h1M386 207h1M745 207h1M751 207h1M347 208h1M384 208h1M387 209h1M278 210h1M348 210h1M383 210h1M744 210h2M747 210h3M751 210h2M385 211h1M349 212h1M383 212h1M387 212h1M745 213h1M751 213h1M274 214h1M349 214h1M383 214h1M744 214h1M752 214h1M384 215h1M387 215h1M350 216h1M383 216h1M270 218h1M350 218h1M383 218h1M386 218h1M383 219h1M351 220h1M382 220h1M386 221h1M266 222h1M352 222h1M352 224h1M386 224h1M262 226h1M353 226h1M382 226h1M381 227h1M385 227h1M354 228h1M382 228h1M393 228h1M258 229h1M354 230h1M381 230h1M385 230h1M380 231h1M355 232h1M381 232h1M254 233h1M385 233h1M356 234h1M381 234h1M379 235h1M356 236h1M381 236h1M384 236h1M250 237h1M357 238h1M381 238h1M378 239h1M384 239h1M358 240h1M380 240h1M246 241h1M358 242h1M380 242h1M383 242h1M377 243h1M359 244h1M380 244h1M242 245h1M383 245h1M360 246h1M380 246h1M376 247h1M360 248h1M380 248h1M383 248h1M238 249h1M361 250h1M379 250h1M375 251h1M382 251h1M362 252h1M379 252h1M234 253h1M362 254h1M379 254h1M382 254h1M375 255h1M230 256h1M363 256h1M379 256h1M746 256h1M750 256h1M382 257h1M747 257h3M364 258h1M378 258h1M374 259h1M226 260h1M364 260h1M378 260h1M381 260h1M747 261h1M749 261h1M365 262h1M378 262h1M373 263h1M381 263h1M746 263h2M749 263h2M222 264h1M366 264h1M378 264h1M366 266h1M378 266h1M747 266h3M372 267h1M218 268h1M367 268h1M377 268h1M380 269h1M368 270h1M377 270h1M747 270h1M749 270h1M371 271h1M214 272h1M368 272h1M377 272h1M746 272h2M749 272h2M369 274h1M377 274h1M370 275h1M210 276h1M370 276h1M377 276h1M370 278h1M376 278h1M369 279h1M206 280h1M371 280h1M376 280h1M379 281h1M372 282h1M376 282h1M368 283h1M202 284h1M372 284h1M378 284h1M373 286h1M198 287h1M367 287h1M378 287h1M374 288h1M374 290h1M378 290h1M194 291h1M366 291h1M377 293h1M375 294h2M190 295h1M365 295h1M375 296h3M374 298h1M377 298h1M186 299h1M364 299h1M377 299h1M157 300h1M374 300h1M378 300h1M160 302h1M374 302h1M376 302h1M378 302h1M182 303h1M363 303h1M163 304h1M374 304h1M379 304h1M376 305h1M166 306h1M374 306h1M380 306h1M745 306h1M751 306h1M178 307h1M363 307h1M169 308h1M373 308h1M375 308h1M380 308h1M747 309h1M749 309h1M172 310h1M373 310h1M381 310h1M174 311h1M362 311h1M375 311h1M745 311h1M751 311h1M175 312h1M373 312h1M382 312h1M747 312h1M749 312h1M178 313h1M747 313h1M749 313h1M170 314h1M373 314h1M375 314h1M382 314h1M748 314h1M181 315h1M361 315h1M373 316h1M383 316h1M184 317h1M374 317h1M166 318h1M372 318h1M384 318h1M187 319h1M360 319h1M372 320h1M374 320h1M384 320h1M190 321h1M162 322h1M372 322h1M385 322h1M193 323h1M359 323h1M374 323h1M372 324h1M386 324h1M196 325h1M159 326h1M371 326h1M373 326h1M386 326h1M161 327h2M199 327h1M358 327h1M163 328h3M202 328h1M371 328h1M387 328h1M166 329h2M373 329h1M168 330h3M205 330h1M371 330h1M388 330h1M171 331h3M357 331h1M174 332h3M208 332h1M371 332h1M373 332h1M388 332h1M177 333h3M180 334h2M211 334h1M371 334h1M389 334h1M182 335h3M356 335h1M372 335h1M185 336h3M214 336h1M370 336h1M389 336h1M188 337h3M191 338h3M217 338h1M370 338h1M372 338h1M390 338h1M194 339h2M355 339h1M196 340h3M220 340h1M370 340h1M391 340h1M199 341h3M372 341h1M202 342h3M223 342h1M370 342h1M391 342h1M205 343h3M226 343h1M354 343h1M208 344h2M370 344h2M392 344h1M210 345h3M229 345h1M213 346h3M369 346h1M393 346h1M216 347h3M232 347h1M353 347h1M371 347h1M219 348h3M369 348h1M393 348h1M222 349h2M235 349h1M224 350h3M369 350h2M394 350h1M227 351h3M238 351h1M352 351h1M230 352h3M369 352h1M395 352h1M233 353h3M241 353h1M370 353h1M236 354h3M369 354h1M395 354h1M239 355h2M244 355h1M351 355h1M241 356h3M368 356h1M370 356h1M396 356h1M244 357h4M247 358h4M368 358h1M397 358h1M250 359h3M350 359h1M369 359h1M253 360h2M368 360h1M397 360h1M255 361h3M256 362h1M258 362h3M368 362h2M398 362h1M261 363h3M350 363h1M259 364h1M264 364h3M368 364h1M399 364h1M267 365h2M369 365h1M262 366h1M269 366h3M367 366h1M399 366h1M272 367h3M349 367h1M265 368h1M275 368h3M367 368h2M400 368h1M278 369h3M268 370h1M281 370h2M367 370h1M401 370h1M283 371h3M348 371h1M368 371h1M271 372h1M286 372h3M367 372h1M401 372h1M289 373h3M274 374h1M292 374h3M367 374h2M402 374h1M277 375h1M295 375h2M347 375h1M297 376h3M366 376h1M403 376h1M280 377h1M300 377h3M367 377h1M303 378h3M366 378h1M403 378h1M283 379h1M306 379h3M346 379h1M309 380h2M366 380h2M404 380h1M286 381h1M311 381h3M314 382h3M405 382h1M289 383h1M317 383h3M345 383h1M320 384h3M405 384h1M292 385h1M323 385h3M326 386h2M365 386h2M406 386h1M295 387h1M328 387h3M344 387h1M331 388h3M365 388h1M407 388h1M298 389h1M334 389h3M366 389h1M301 390h1M337 390h3M365 390h1M407 390h1M340 391h2M343 391h1M304 392h1M342 392h3M365 392h1M347 393h1M307 394h1M348 394h3M364 394h1M342 395h1M351 395h3M365 395h1M310 396h1M354 396h2M364 396h1M413 396h1M344 397h1M356 397h3M313 398h1M344 398h1M359 398h3M365 398h1M341 399h1M362 399h2M316 400h1M365 400h3M368 401h2M319 402h1M370 402h3M340 403h1M373 403h3M322 404h1M363 404h2M376 404h3M325 405h1M379 405h3M363 406h1M382 406h2M328 407h1M339 407h1M364 407h1M384 407h3M434 407h5M363 408h1M387 408h3M433 408h1M439 408h1M331 409h1M390 409h2M363 410h1M334 411h1M338 411h1M363 412h1M337 413h1M363 413h1M61 414h1M75 414h1M362 414h1M395 414h1M433 414h1M439 414h1M62 415h1M74 415h1M338 415h1M340 415h1M434 415h2M437 415h2M63 416h2M66 416h5M72 416h2M362 416h1M343 417h1M346 419h1M432 419h4M437 419h4M349 420h1M352 422h1M362 422h1M355 424h1M358 426h1M63 428h2M66 428h5M72 428h2M361 428h1M62 429h1M74 429h1M410 429h1M418 429h1M61 430h1M75 430h1M411 430h1M417 430h1M412 431h5M411 432h1M417 432h1M519 434h5M518 435h1M524 435h1M332 438h1M411 438h1M417 438h1M412 439h2M415 439h2M518 439h1M524 439h1M513 440h7M523 440h7M410 443h4M415 443h4M513 444h17"/>
<path transform="translate(.5,0)" stroke="#00ff00" d="M65 416v13M71 416v13M302 31v3M302 41v3M304 29v3M304 39v3M306 33v3M306 43v3M308 31v3M308 41v3M310 29v3M310 39v3M312 33v3M312 43v3M314 31v3M314 41v3M333 434v4M334 431v3M335 427v4M336 423v4M337 419v5M338 417v3M339 413v4M340 410v3M341 406v4M342 403v3M343 399v4M345 393v3M346 389v5M347 386v3M348 382v4M349 379v3M350 375v4M351 372v3M352 368v4M353 365v3M354 361v4M355 358v3M356 354v4M357 351v3M358 347v4M359 344v3M360 340v4M361 337v3M361 424v3M362 333v4M362 418v3M363 330v3M364 326v4M364 398v5M365 323v3M366 319v4M366 382v3M367 316v3M368 313v3M369 309v4M370 306v3M371 302v4M372 299v3M373 295v4M374 292v3M375 288v5M376 284v4M377 281v4M378 278v3M379 274v5M380 271v3M381 266v5M382 222v3M382 264v3M383 260v4M384 257v3M385 253v4M386 250v3M387 246v4M388 243v3M389 239v4M390 236v3M391 233v3M392 229v4M394 222v4M395 219v3M396 215v4M397 212v3M398 208v4M399 205v3M400 201v4M410 433v5M414 439v7M418 433v5M427 172v7M429 183v3M431 174v9M432 409v5M433 183v3M435 172v7M436 415v9M440 409v5M517 436v3M525 436v3M745 167v7M746 208v5M746 258v3M746 267v3M746 307v4M747 167v7M748 261v4M748 270v5M748 308v5M749 167v7M750 208v5M750 258v3M750 267v3M750 307v4"/>
<path transform="translate(0,.5)" stroke="#ffff00" d="M442 69h3M431 70h1M439 70h1M441 70h1M445 70h1M430 71h1M440 71h1M437 72h1M439 72h1M440 73h1M441 74h1M445 74h1M442 75h3M443 76h1M444 77h1M433 78h1M435 78h1M445 78h1M445 84h1M444 85h1M745 116h1M752 116h1M746 117h1M748 117h2M751 117h1M746 123h1M748 123h2M751 123h1M745 124h1M752 124h1M332 153h1M412 158h4M417 158h4M747 158h3M744 161h2M747 161h1M749 161h1M751 161h2M420 162h3M419 163h1M423 163h1M744 163h9M417 164h2M423 167h1M423 171h1M424 172h1M394 183h1M386 185h1M388 187h1M394 192h1M398 196h1M746 196h1M749 196h1M752 196h1M745 197h2M748 197h2M751 197h1M745 198h1M747 198h2M750 198h2M744 199h1M747 199h1M750 199h1M746 201h1M749 201h1M752 201h1M745 202h2M748 202h2M751 202h1M745 203h1M747 203h2M750 203h2M744 204h1M747 204h1M750 204h1M31 282h1M43 282h1M32 283h1M42 283h1M32 284h1M42 284h1M33 285h2M40 285h2M35 286h5M33 287h2M40 287h2M32 288h1M42 288h1M32 289h1M42 289h1M32 295h1M42 295h1M32 296h1M42 296h1M33 297h2M40 297h2M745 297h2M748 297h2M35 298h5M749 299h2M748 300h1M751 300h1M751 301h1M750 302h1M750 303h1M751 304h1M414 523h1M418 523h1M422 523h1M415 524h1M417 524h1M419 524h1M421 524h1M423 524h1M427 526h1M426 527h1M425 528h1M425 536h1M427 536h1M426 537h1M425 538h1M427 538h1M424 539h1M428 539h1"/>
<path transform="translate(.5,0)" stroke="#ffff00" d="M31 290v5M43 290v5M416 156v15M416 525v13M420 525v13M422 168v3M424 164v3M424 525v11M428 525v11M432 69v9M434 79v5M436 73v5M438 69v3M446 71v3M446 79v5M746 159v3M747 117v7M747 296v8M750 117v7M750 159v3"/>
<path transform="translate(0,.5)" stroke="#0000ff" d="M168 59h1M184 59h1M169 60h1M183 60h1M170 61h1M182 61h1M171 62h1M181 62h1M171 63h1M181 63h1M168 67h4M173 67h7M181 67h4M171 71h1M181 71h1M171 72h1M181 72h1M170 73h1M182 73h1M169 74h1M183 74h1M168 75h1M184 75h1M747 136h3M746 137h1M750 137h1M746 141h1M750 141h1M744 142h1M746 142h1M750 142h1M745 143h1M751 143h1M752 144h1M396 146h1M398 146h1M401 146h2M404 146h2M408 146h1M410 146h1M398 149h1M408 149h1M398 150h1M408 150h1M399 151h2M406 151h2M401 152h2M404 152h2M399 156h4M404 156h4M750 176h2M751 177h1M750 178h1M745 179h1M749 179h1M389 180h1M746 180h1M748 180h1M747 181h1M746 182h1M748 182h1M745 183h1M749 183h1M744 184h1M385 186h1M383 189h1M389 189h1M387 191h1M380 192h1M386 193h1M378 195h1M384 195h1M382 197h1M375 198h1M380 199h1M373 201h1M379 201h1M399 201h1M377 203h1M397 203h1M370 204h1M375 205h1M395 205h1M368 207h1M374 207h1M393 207h1M372 209h1M391 209h1M365 210h1M370 211h1M389 211h1M363 213h1M368 213h1M387 213h1M367 215h1M386 215h1M360 216h1M745 216h2M750 216h2M365 217h1M384 217h1M744 217h1M752 217h1M744 218h1M752 218h1M358 219h1M363 219h1M382 219h1M745 219h1M751 219h1M361 221h1M380 221h1M355 222h1M360 223h1M378 223h1M353 225h1M358 225h1M376 225h1M356 227h1M374 227h1M350 228h1M354 229h1M372 229h1M348 231h1M353 231h1M370 231h1M351 233h1M368 233h1M345 234h1M349 235h1M366 235h1M343 237h1M348 237h1M364 237h1M346 239h1M362 239h1M340 240h1M344 241h1M360 241h1M337 243h1M342 243h1M358 243h1M341 245h1M357 245h1M335 246h1M746 246h3M339 247h1M355 247h1M745 247h1M749 247h2M746 248h1M750 248h1M332 249h1M337 249h1M353 249h1M335 251h1M351 251h1M330 252h1M746 252h1M750 252h1M334 253h1M349 253h1M745 253h1M749 253h2M746 254h3M327 255h1M332 255h1M347 255h1M330 257h1M345 257h1M325 258h1M328 259h1M343 259h1M322 261h1M327 261h1M341 261h1M325 263h1M339 263h1M320 264h1M323 265h1M337 265h1M317 267h1M322 267h1M335 267h1M320 269h1M333 269h1M315 270h1M318 271h1M331 271h1M312 273h1M316 273h1M330 273h1M315 275h1M328 275h1M310 276h1M313 277h1M326 277h1M307 279h1M311 279h1M324 279h1M309 281h1M322 281h1M305 282h1M308 283h1M320 283h1M302 285h1M306 285h1M318 285h1M304 287h1M316 287h1M300 288h1M302 289h1M314 289h1M297 291h1M301 291h1M312 291h1M299 293h1M310 293h1M295 294h1M297 295h1M308 295h1M292 297h1M296 297h1M306 297h1M294 299h1M304 299h1M290 300h1M553 300h1M557 300h1M561 300h1M292 301h1M302 301h1M554 301h1M556 301h1M558 301h1M560 301h1M562 301h1M287 303h1M290 303h1M301 303h1M477 304h3M289 305h1M299 305h1M285 306h1M287 307h1M297 307h1M477 308h3M282 309h1M285 309h1M295 309h1M473 309h1M483 309h1M448 310h1M473 310h1M483 310h1M283 311h1M293 311h1M474 311h2M481 311h2M280 312h1M476 312h2M479 312h2M567 312h1M569 312h1M282 313h1M291 313h1M277 315h1M280 315h1M289 315h1M564 315h1M567 315h1M474 316h4M479 316h4M565 316h2M278 317h1M287 317h1M744 317h1M747 317h1M749 317h1M752 317h1M275 318h1M277 319h1M285 319h1M746 319h1M750 319h1M747 320h1M749 320h1M272 321h1M275 321h1M283 321h1M746 322h2M749 322h2M273 323h1M281 323h1M270 324h1M119 325h5M271 325h1M279 325h1M118 326h1M124 326h2M748 326h1M117 327h1M126 327h1M152 327h1M267 327h1M270 327h1M277 327h1M747 327h1M749 327h1M118 328h1M127 328h1M748 328h1M119 329h1M128 329h1M268 329h1M275 329h1M746 329h1M750 329h1M120 330h1M128 330h1M265 330h1M747 330h1M749 330h1M120 331h1M266 331h1M273 331h1M746 332h2M749 332h2M262 333h1M264 333h1M272 333h1M120 335h1M263 335h1M270 335h1M120 336h1M128 336h1M260 336h1M119 337h1M128 337h1M261 337h1M268 337h1M118 338h1M127 338h1M117 339h1M126 339h1M257 339h1M259 339h1M266 339h1M118 340h1M124 340h2M119 341h5M257 341h1M264 341h1M255 342h1M256 343h1M262 343h1M252 345h1M254 345h1M260 345h1M252 347h1M258 347h1M250 348h1M251 349h1M256 349h1M247 351h1M249 351h1M254 351h1M247 353h1M252 353h1M245 354h1M245 355h1M250 355h1M242 357h1M248 357h1M242 359h1M246 359h1M240 360h1M240 361h1M245 361h1M237 363h2M243 363h1M237 365h1M241 365h1M235 366h1M235 367h1M239 367h1M232 369h2M237 369h1M231 371h1M235 371h1M230 372h1M233 373h1M227 375h2M231 375h1M226 377h1M229 377h1M225 378h1M225 379h1M227 379h1M222 381h2M225 381h1M221 383h1M223 383h1M220 384h1M219 385h1M221 385h1M217 387h3M216 389h2M215 390h1M214 391h1M216 391h1M212 393h1M214 393h1M211 395h2M210 396h1M209 397h2M207 399h2M205 401h2M205 402h1M204 403h1M158 514h5M155 515h3M163 515h1M154 516h1M164 516h3M153 517h1M163 517h1M167 517h1M152 518h1M154 520h3M153 521h1M157 521h1M163 521h1M167 521h1M164 522h3M168 524h1M153 525h1M157 525h1M167 525h1M154 526h3M166 526h1M157 527h1M163 527h3M158 528h5"/>
<path transform="translate(.5,0)" stroke="#0000ff" d="M121 332v3M129 331v5M152 522v3M158 522v3M162 518v3M168 518v3M172 64v7M180 64v7M397 144v5M403 144v17M409 144v5M472 304v5M476 305v3M478 312v9M480 305v3M484 304v5M555 302v13M559 302v13M563 302v13M568 311v4M745 138v3M745 316v3M745 326v3M747 217v3M747 249v3M748 220v5M748 316v9M748 330v5M749 217v3M751 138v3M751 249v3M751 316v3M751 326v3M752 176v3"/>
<path transform="translate(0,.5)" stroke="#00ffff" d="M387 187h1M388 189h1M391 191h1M393 194h1M394 197h1M392 199h1M395 200h1M393 201h1M394 203h1M396 203h1M398 206h1M396 207h1M397 209h1M399 209h1M400 212h1M399 213h1M400 215h1M403 218h1M401 219h1M404 221h1M403 223h1M405 224h1M404 225h1M405 227h1M407 227h1M406 229h1M408 230h1M407 231h1M408 233h2M409 235h1M411 236h1M409 237h1M410 239h1M412 239h1M411 241h1M413 242h1M412 243h1M413 245h2M414 247h1M416 248h1M415 249h1M416 251h2M417 253h1M418 254h1M418 255h1M419 257h2M419 259h1M421 260h1M420 261h1M421 263h2M422 265h1M424 266h1M423 267h1M424 269h2M425 271h1M426 272h1M426 273h1M427 275h1M428 277h1M429 278h1M428 279h1M429 281h2M430 283h1M431 284h1M431 285h1M432 287h2M433 289h1M434 290h1M434 291h1M435 293h1M436 295h1M436 296h1M437 297h1M437 299h2M438 301h1M439 302h1M439 303h1M440 305h1M441 307h1M442 308h1M442 309h1M441 310h1M441 311h1M440 312h1M439 313h1M439 314h1M438 315h1M437 316h1M437 317h1M436 318h1M435 319h1M435 320h1M434 321h1M433 322h1M432 323h1M432 324h1M431 325h1M430 326h1M430 327h1M429 328h1M428 329h1M428 330h1M427 331h1M426 332h1M426 333h1M425 334h1M424 335h1M424 336h1M423 337h1M422 338h1M422 339h1M421 340h1M420 341h1M420 342h1M419 343h1M418 344h1M417 345h1M417 346h1M416 347h1M415 348h1M415 349h1M414 350h1M413 351h1M413 352h1M412 353h1M411 354h1M411 355h1M410 356h1M409 357h1M409 358h1M408 359h1M407 360h1M407 361h1M406 362h1M404 365h1M403 366h1M403 367h1M402 368h1M401 369h1M400 370h1M400 371h1M399 372h1M398 373h1M398 374h1M397 375h1M396 376h1M396 377h1M395 378h1M394 379h1M394 380h1M393 381h1M392 383h1M391 384h1M390 385h1M390 386h1M389 387h1M388 388h1M388 389h1M387 390h1M386 391h1M386 392h1M385 393h1M383 395h1M383 396h1M382 397h1M381 398h1M381 399h1M380 400h1M379 401h1M379 402h1M378 403h1M203 405h1M377 405h1M206 406h1M376 406h1M209 407h1M375 407h1M212 408h1M215 408h1M375 408h1M218 409h1M374 409h1M221 410h1M373 410h1M224 411h1M373 411h1M227 412h1M230 412h1M372 412h1M233 413h1M371 413h1M236 414h1M371 414h1M239 415h1M242 415h1M370 415h1M245 416h1M369 416h1M248 417h1M368 417h1M251 418h1M368 418h1M254 419h1M257 419h1M367 419h1M260 420h1M366 420h1M263 421h1M366 421h1M266 422h1M365 422h1M269 423h1M272 423h1M364 423h1M275 424h1M364 424h1M278 425h1M363 425h1M281 426h1M284 426h1M362 426h1M287 427h1M362 427h1M290 428h1M293 429h1M296 430h1M299 430h1M302 431h1M305 432h1M308 433h1M311 434h1M314 434h1M317 435h1M320 436h1M323 437h1M326 437h1M329 438h1"/>
<path transform="translate(0,.5)" stroke="#ffffff" d="M285 15h28M275 16h10M313 16h10M265 17h10M323 17h10M255 18h10M333 18h10M248 19h7M343 19h8M243 20h5M351 20h5M238 21h5M356 21h5M234 22h2M237 22h1M361 22h4M230 23h4M365 23h4M226 24h4M369 24h3M223 25h3M372 25h4M220 26h3M376 26h3M217 27h3M379 27h3M214 28h3M382 28h3M211 29h3M382 29h1M385 29h3M207 30h4M388 30h3M204 31h3M391 31h4M201 32h3M395 32h3M199 33h2M398 33h2M197 34h2M400 34h2M195 35h2M402 35h2M192 36h3M404 36h3M190 37h2M407 37h2M188 38h2M409 38h2M186 39h2M411 39h2M183 40h3M413 40h3M181 41h2M416 41h2M179 42h2M418 42h2M177 43h2M420 43h2M174 44h3M422 44h3M172 45h2M425 45h2M170 46h2M427 46h2M168 47h2M429 47h2M166 48h2M431 48h2M164 49h2M433 49h2M162 50h2M435 50h2M160 51h2M437 51h2M158 52h2M439 52h2M157 53h1M441 53h1M155 54h2M442 54h2M153 55h2M444 55h1M152 56h1M445 56h2M150 57h2M447 57h2M149 58h1M449 58h1M147 59h2M450 59h2M146 60h1M288 60h19M308 60h3M452 60h1M144 61h2M270 61h17M311 61h17M453 61h2M143 62h1M264 62h2M267 62h3M329 62h5M455 62h1M141 63h2M260 63h4M334 63h4M456 63h2M140 64h1M254 64h6M338 64h6M458 64h1M138 65h2M248 65h6M344 65h4M349 65h1M459 65h2M136 66h2M244 66h2M247 66h1M350 66h4M461 66h1M135 67h1M240 67h4M354 67h5M462 67h2M133 68h2M236 68h4M359 68h4M464 68h2M132 69h1M232 69h4M363 69h4M466 69h1M130 70h2M229 70h3M367 70h1M467 70h1M129 71h1M227 71h2M370 71h2M468 71h2M128 72h1M224 72h3M372 72h3M470 72h1M126 73h2M220 73h4M226 73h1M375 73h4M471 73h1M125 74h1M217 74h3M379 74h3M472 74h2M124 75h1M214 75h3M289 75h17M307 75h3M382 75h2M474 75h1M123 76h1M212 76h2M272 76h16M310 76h16M384 76h3M475 76h1M122 77h1M209 77h3M265 77h3M269 77h3M327 77h7M387 77h1M476 77h1M121 78h1M207 78h2M259 78h6M334 78h5M389 78h2M477 78h1M120 79h1M205 79h2M255 79h4M339 79h4M391 79h2M478 79h1M119 80h1M203 80h2M206 80h1M251 80h4M343 80h2M346 80h1M387 80h1M393 80h2M479 80h1M118 81h1M201 81h2M207 81h1M247 81h2M250 81h1M347 81h4M387 81h1M395 81h3M480 81h1M117 82h1M199 82h2M207 82h1M244 82h3M349 82h1M351 82h4M398 82h2M481 82h1M115 83h2M197 83h2M208 83h1M240 83h4M355 83h4M400 83h2M482 83h1M114 84h1M194 84h3M208 84h1M236 84h4M359 84h3M402 84h2M483 84h2M113 85h1M192 85h2M209 85h1M232 85h4M239 85h1M362 85h2M365 85h1M404 85h2M485 85h1M111 86h2M190 86h2M209 86h1M229 86h1M231 86h1M366 86h4M406 86h2M486 86h1M110 87h1M188 87h2M210 87h1M227 87h2M370 87h2M407 87h3M487 87h2M109 88h1M187 88h1M210 88h1M225 88h2M372 88h2M384 88h1M406 88h1M410 88h2M489 88h1M108 89h1M185 89h2M188 89h1M211 89h1M221 89h4M374 89h3M384 89h1M406 89h1M412 89h2M490 89h1M107 90h1M183 90h2M188 90h1M211 90h1M217 90h4M377 90h4M383 90h1M405 90h1M414 90h2M491 90h1M106 91h1M181 91h2M189 91h1M212 91h1M214 91h3M381 91h4M405 91h1M416 91h2M492 91h1M105 92h2M180 92h1M189 92h1M212 92h2M385 92h2M404 92h1M418 92h1M493 92h1M104 93h1M107 93h1M178 93h2M190 93h1M210 93h2M387 93h2M404 93h1M419 93h2M494 93h1M103 94h1M108 94h1M176 94h2M190 94h1M208 94h2M389 94h2M403 94h1M421 94h2M495 94h1M102 95h1M109 95h1M174 95h2M191 95h1M206 95h2M391 95h2M403 95h1M423 95h2M496 95h1M101 96h1M110 96h1M173 96h1M191 96h1M204 96h2M393 96h2M402 96h1M425 96h1M497 96h1M100 97h1M111 97h1M171 97h2M192 97h1M202 97h2M395 97h2M402 97h1M425 97h3M498 97h1M99 98h1M112 98h1M170 98h1M192 98h1M200 98h2M397 98h2M424 98h1M428 98h1M499 98h1M98 99h1M113 99h1M169 99h1M193 99h1M198 99h2M399 99h2M424 99h1M429 99h1M500 99h1M97 100h1M114 100h1M167 100h2M170 100h1M193 100h1M196 100h2M402 100h1M423 100h1M430 100h2M501 100h1M96 101h1M114 101h1M166 101h1M170 101h1M194 101h2M403 101h2M422 101h1M432 101h1M502 101h1M95 102h1M115 102h1M164 102h2M171 102h1M192 102h2M405 102h2M422 102h1M433 102h2M503 102h1M94 103h1M116 103h1M163 103h1M172 103h1M190 103h2M407 103h2M421 103h1M435 103h1M504 103h1M93 104h1M117 104h1M162 104h1M172 104h1M188 104h2M409 104h2M421 104h1M436 104h1M505 104h1M92 105h1M118 105h1M160 105h2M173 105h1M187 105h1M283 105h33M411 105h1M420 105h1M437 105h2M506 105h1M91 106h1M119 106h1M159 106h1M174 106h1M185 106h2M276 106h7M316 106h7M412 106h2M419 106h1M439 106h1M506 106h2M90 107h1M120 107h1M157 107h2M174 107h1M184 107h1M269 107h7M323 107h6M414 107h1M419 107h1M440 107h2M505 107h1M508 107h1M89 108h1M121 108h1M156 108h1M175 108h1M182 108h2M263 108h6M329 108h7M415 108h2M418 108h1M442 108h1M504 108h1M509 108h1M88 109h1M122 109h1M155 109h1M176 109h1M181 109h1M258 109h5M336 109h5M417 109h1M442 109h2M503 109h1M510 109h1M87 110h1M123 110h1M153 110h2M176 110h1M179 110h2M254 110h4M341 110h1M343 110h2M418 110h2M441 110h1M444 110h2M502 110h1M511 110h1M86 111h1M124 111h1M152 111h1M177 111h2M251 111h3M345 111h3M420 111h2M441 111h1M446 111h1M501 111h1M512 111h1M86 112h1M125 112h1M151 112h1M153 112h1M175 112h2M248 112h3M348 112h3M422 112h2M440 112h1M447 112h1M500 112h1M512 112h1M85 113h1M126 113h1M149 113h2M154 113h1M174 113h1M245 113h1M351 113h3M424 113h1M439 113h1M448 113h1M498 113h2M513 113h1M84 114h1M127 114h1M148 114h1M154 114h1M173 114h1M241 114h4M354 114h4M425 114h1M438 114h1M449 114h2M497 114h1M514 114h1M83 115h1M128 115h1M147 115h1M155 115h1M171 115h2M238 115h3M358 115h3M426 115h1M438 115h1M451 115h1M496 115h1M515 115h1M83 116h1M129 116h1M146 116h1M156 116h1M170 116h1M235 116h3M361 116h3M427 116h2M437 116h1M452 116h1M495 116h1M515 116h1M82 117h1M129 117h1M145 117h1M157 117h1M169 117h1M232 117h3M364 117h3M429 117h1M436 117h1M453 117h1M494 117h1M516 117h1M81 118h1M130 118h1M144 118h1M158 118h1M168 118h1M229 118h3M367 118h3M430 118h1M435 118h1M454 118h1M493 118h1M517 118h1M80 119h1M131 119h1M142 119h2M159 119h1M166 119h2M226 119h3M370 119h3M431 119h2M435 119h1M455 119h2M492 119h1M518 119h1M79 120h1M132 120h1M141 120h1M159 120h1M165 120h1M224 120h2M373 120h2M433 120h2M457 120h1M491 120h1M519 120h1M78 121h1M133 121h1M140 121h1M160 121h1M164 121h1M222 121h2M375 121h2M434 121h1M458 121h1M490 121h1M520 121h1M77 122h1M134 122h1M139 122h1M161 122h3M219 122h3M377 122h2M435 122h2M458 122h2M489 122h1M521 122h1M76 123h1M135 123h1M138 123h1M161 123h1M217 123h2M379 123h2M434 123h1M437 123h1M457 123h1M460 123h1M488 123h1M522 123h1M75 124h1M136 124h2M160 124h1M215 124h2M381 124h2M434 124h1M438 124h1M456 124h1M461 124h1M487 124h1M523 124h1M74 125h1M135 125h1M137 125h1M158 125h2M213 125h2M383 125h2M433 125h1M439 125h1M455 125h1M462 125h2M486 125h1M524 125h1M73 126h1M134 126h1M138 126h1M157 126h1M211 126h2M385 126h2M432 126h1M440 126h2M454 126h1M464 126h1M485 126h1M525 126h1M73 127h1M133 127h1M139 127h1M156 127h1M209 127h2M387 127h2M431 127h1M442 127h1M453 127h1M465 127h1M484 127h1M525 127h1M72 128h1M132 128h1M140 128h1M155 128h1M207 128h2M389 128h2M431 128h1M443 128h1M453 128h1M466 128h1M482 128h2M526 128h1M71 129h1M131 129h1M141 129h1M154 129h1M205 129h2M391 129h2M430 129h1M444 129h1M452 129h1M467 129h1M481 129h1M527 129h1M70 130h1M130 130h1M142 130h1M152 130h2M203 130h2M393 130h2M429 130h1M445 130h1M451 130h1M468 130h1M480 130h1M528 130h1M70 131h1M129 131h1M142 131h1M151 131h1M202 131h1M395 131h2M428 131h1M446 131h2M450 131h1M469 131h1M479 131h1M528 131h1M69 132h1M128 132h1M143 132h1M150 132h1M200 132h2M397 132h2M428 132h1M448 132h2M470 132h1M478 132h1M529 132h1M68 133h1M127 133h1M144 133h1M149 133h1M199 133h1M399 133h1M427 133h1M449 133h1M471 133h1M477 133h1M530 133h1M68 134h1M126 134h1M145 134h1M148 134h1M197 134h2M400 134h2M426 134h1M450 134h1M472 134h1M476 134h1M530 134h1M67 135h1M125 135h1M146 135h2M196 135h1M402 135h1M425 135h1M451 135h1M473 135h1M475 135h1M531 135h1M66 136h1M124 136h1M146 136h1M194 136h2M403 136h2M425 136h1M452 136h1M474 136h1M532 136h1M66 137h1M124 137h1M145 137h1M192 137h2M405 137h2M424 137h1M453 137h1M473 137h2M532 137h1M65 138h1M123 138h1M144 138h1M191 138h1M407 138h1M423 138h1M454 138h1M472 138h1M475 138h1M533 138h1M65 139h1M122 139h1M143 139h1M189 139h2M408 139h2M422 139h1M455 139h1M471 139h1M476 139h1M533 139h1M64 140h1M121 140h2M142 140h1M188 140h1M410 140h1M422 140h1M456 140h1M470 140h1M477 140h1M534 140h1M63 141h1M120 141h1M123 141h1M141 141h1M186 141h2M411 141h2M421 141h1M457 141h1M468 141h2M478 141h1M535 141h1M63 142h1M119 142h1M124 142h1M140 142h1M185 142h1M413 142h1M420 142h1M458 142h1M467 142h1M479 142h1M535 142h1M62 143h1M119 143h1M125 143h1M139 143h1M184 143h1M414 143h1M419 143h1M459 143h1M466 143h1M479 143h1M536 143h1M61 144h1M118 144h1M126 144h1M138 144h1M182 144h2M415 144h2M419 144h1M460 144h1M465 144h1M480 144h1M537 144h1M61 145h1M117 145h1M127 145h2M137 145h1M181 145h1M417 145h2M461 145h1M464 145h1M481 145h1M537 145h1M60 146h1M116 146h1M129 146h1M136 146h1M180 146h1M418 146h1M462 146h2M482 146h1M538 146h1M59 147h1M115 147h1M130 147h1M135 147h1M179 147h1M419 147h1M463 147h1M483 147h1M539 147h1M59 148h1M114 148h1M131 148h1M134 148h1M177 148h2M420 148h1M464 148h1M484 148h1M539 148h1M58 149h1M113 149h1M132 149h2M176 149h1M421 149h2M465 149h1M485 149h1M540 149h1M57 150h1M113 150h1M132 150h1M175 150h1M423 150h1M466 150h1M485 150h1M541 150h1M57 151h1M112 151h1M131 151h1M174 151h1M424 151h1M467 151h1M486 151h1M541 151h1M56 152h1M111 152h1M130 152h1M173 152h1M425 152h1M468 152h1M487 152h1M542 152h1M55 153h1M110 153h1M130 153h1M171 153h2M426 153h2M468 153h1M486 153h1M488 153h1M543 153h1M55 154h1M110 154h1M129 154h1M170 154h1M428 154h1M469 154h1M484 154h2M488 154h1M543 154h1M54 155h1M109 155h1M128 155h1M169 155h1M429 155h1M470 155h1M483 155h1M489 155h1M544 155h1M54 156h1M108 156h2M127 156h1M168 156h1M430 156h1M471 156h1M482 156h1M490 156h1M544 156h1M53 157h1M107 157h1M110 157h2M126 157h1M167 157h1M431 157h1M472 157h1M481 157h1M491 157h1M545 157h1M52 158h1M107 158h1M112 158h1M125 158h1M166 158h1M432 158h1M473 158h1M480 158h1M491 158h1M546 158h1M52 159h1M106 159h1M113 159h1M125 159h1M165 159h1M433 159h1M473 159h1M478 159h2M492 159h1M546 159h1M51 160h1M105 160h1M114 160h2M124 160h1M126 160h1M164 160h1M434 160h1M474 160h1M477 160h1M493 160h1M547 160h1M51 161h1M105 161h1M116 161h1M123 161h1M127 161h2M163 161h1M435 161h1M475 161h1M493 161h1M547 161h1M50 162h1M104 162h1M117 162h1M122 162h1M129 162h1M162 162h1M436 162h1M494 162h1M548 162h1M50 163h1M103 163h1M118 163h2M122 163h1M130 163h1M161 163h1M437 163h1M495 163h1M548 163h1M49 164h1M102 164h1M120 164h2M131 164h2M160 164h1M438 164h1M477 164h1M496 164h1M549 164h1M49 165h1M102 165h1M120 165h1M133 165h1M159 165h1M439 165h1M478 165h1M496 165h1M549 165h1M48 166h1M101 166h1M119 166h1M134 166h1M158 166h1M440 166h1M479 166h1M497 166h1M550 166h1M48 167h1M100 167h1M119 167h1M135 167h1M157 167h1M441 167h1M479 167h1M498 167h1M550 167h1M47 168h1M100 168h1M118 168h1M136 168h2M156 168h1M442 168h1M480 168h1M498 168h1M551 168h1M47 169h1M99 169h1M117 169h1M138 169h1M155 169h1M443 169h1M481 169h1M499 169h1M551 169h1M46 170h1M98 170h1M116 170h1M139 170h1M154 170h1M444 170h1M482 170h1M497 170h2M500 170h1M552 170h1M46 171h1M115 171h1M140 171h1M153 171h1M445 171h1M483 171h1M496 171h1M501 171h1M552 171h1M45 172h1M115 172h1M141 172h2M153 172h1M445 172h1M483 172h1M494 172h2M501 172h1M553 172h1M45 173h1M96 173h1M114 173h1M143 173h1M152 173h1M446 173h1M484 173h1M493 173h1M502 173h1M553 173h1M95 174h1M98 174h2M113 174h1M144 174h1M151 174h1M447 174h1M485 174h1M491 174h2M503 174h1M95 175h1M100 175h1M112 175h1M145 175h2M150 175h1M448 175h1M486 175h1M490 175h1M503 175h1M94 176h1M101 176h2M112 176h1M147 176h1M149 176h1M449 176h1M486 176h1M488 176h2M504 176h1M43 177h1M94 177h1M103 177h2M111 177h1M148 177h1M450 177h1M487 177h1M504 177h1M555 177h1M43 178h1M93 178h1M105 178h1M111 178h1M148 178h1M450 178h1M487 178h1M505 178h1M555 178h1M42 179h1M93 179h1M106 179h2M110 179h1M147 179h1M451 179h1M488 179h1M505 179h1M556 179h1M42 180h1M92 180h1M108 180h1M110 180h1M146 180h1M452 180h1M488 180h1M506 180h1M556 180h1M41 181h1M91 181h1M109 181h1M145 181h1M453 181h1M489 181h1M507 181h1M557 181h1M41 182h1M91 182h1M108 182h1M144 182h1M454 182h1M490 182h1M507 182h1M557 182h1M90 183h1M108 183h1M144 183h1M454 183h1M490 183h1M508 183h1M90 184h1M107 184h1M143 184h1M455 184h1M491 184h1M508 184h1M89 185h1M106 185h1M142 185h1M456 185h1M492 185h1M509 185h1M39 186h1M89 186h1M106 186h1M141 186h1M457 186h1M492 186h1M509 186h1M559 186h1M39 187h1M88 187h1M105 187h1M141 187h1M457 187h1M493 187h1M510 187h1M559 187h1M38 188h1M87 188h1M104 188h1M140 188h1M458 188h1M494 188h1M508 188h2M511 188h1M560 188h1M38 189h1M87 189h1M104 189h1M139 189h1M459 189h1M494 189h1M506 189h2M511 189h1M560 189h1M37 190h1M86 190h1M103 190h1M139 190h1M459 190h1M495 190h1M504 190h2M512 190h1M561 190h1M37 191h1M86 191h2M103 191h1M138 191h1M460 191h1M495 191h1M502 191h2M512 191h1M561 191h1M85 192h1M88 192h2M102 192h1M137 192h1M461 192h1M500 192h2M513 192h1M85 193h1M90 193h2M102 193h1M137 193h1M461 193h1M498 193h2M513 193h1M92 194h2M101 194h1M136 194h1M462 194h1M497 194h1M35 195h1M94 195h2M101 195h1M136 195h1M462 195h1M494 195h2M497 195h1M563 195h1M35 196h1M96 196h2M100 196h1M135 196h1M463 196h1M492 196h2M498 196h1M563 196h1M34 197h1M83 197h1M98 197h1M100 197h1M134 197h1M464 197h1M490 197h2M498 197h1M515 197h1M564 197h1M34 198h1M83 198h1M134 198h1M464 198h1M488 198h2M499 198h1M515 198h1M564 198h1M33 199h1M82 199h1M133 199h1M465 199h1M486 199h2M499 199h1M516 199h1M565 199h1M33 200h1M82 200h1M98 200h1M132 200h1M466 200h1M484 200h2M500 200h1M516 200h1M565 200h1M81 201h1M98 201h1M132 201h1M466 201h1M482 201h2M500 201h1M517 201h1M81 202h1M97 202h1M131 202h1M467 202h1M480 202h2M501 202h1M517 202h1M80 203h1M97 203h1M130 203h1M468 203h1M478 203h2M501 203h1M518 203h1M80 204h1M96 204h1M130 204h1M468 204h1M476 204h2M502 204h1M518 204h1M79 205h1M96 205h1M129 205h1M469 205h1M474 205h2M502 205h1M519 205h1M79 206h1M95 206h1M129 206h1M469 206h1M472 206h2M503 206h1M517 206h3M78 207h1M95 207h1M128 207h1M470 207h2M503 207h1M515 207h2M520 207h1M78 208h1M94 208h1M128 208h1M470 208h1M504 208h1M513 208h2M520 208h1M94 209h1M127 209h1M471 209h1M504 209h1M511 209h2M78 210h2M93 210h1M127 210h1M471 210h1M505 210h1M509 210h2M80 211h2M93 211h1M126 211h1M472 211h1M505 211h1M507 211h2M76 212h1M82 212h3M92 212h1M126 212h1M472 212h1M506 212h1M522 212h1M76 213h1M85 213h3M92 213h1M125 213h1M473 213h1M506 213h1M522 213h1M88 214h2M125 214h1M473 214h1M90 215h1M124 215h1M474 215h1M29 216h1M124 216h1M474 216h1M30 217h3M123 217h1M475 217h1M33 218h4M123 218h1M475 218h1M37 219h3M40 220h3M43 221h3M46 222h3M121 222h1M477 222h1M49 223h4M121 223h1M477 223h1M53 224h3M120 224h1M478 224h1M56 225h3M88 225h1M120 225h1M478 225h1M510 225h1M59 226h3M88 226h1M510 226h1M525 226h1M62 227h4M71 227h1M87 227h1M511 227h1M522 227h3M527 227h1M66 228h3M71 228h1M87 228h1M511 228h1M518 228h4M527 228h1M69 229h1M515 229h3M71 230h2M513 230h2M73 231h3M76 232h4M80 233h3M83 234h2M573 236h3M569 237h4M565 238h4M561 239h4M557 240h4M552 241h5M548 242h4M544 243h4M540 244h4M536 245h4M529 246h3M533 246h3M525 247h4M521 248h4M518 249h3M66 250h3M69 251h4M73 252h4M77 253h3M532 266h4M526 267h6M522 268h4M63 270h3M66 271h7M73 272h3M530 287h7M524 288h6M61 291h7M68 292h7M76 299h29M131 299h13M494 299h29M524 306h7M531 307h7M68 310h7M454 310h6M62 311h6M460 311h7M523 326h3M526 327h7M144 328h3M533 328h3M140 329h4M73 330h4M136 330h4M67 331h6M134 331h2M63 332h4M519 345h3M522 346h4M526 347h4M530 348h3M78 349h3M74 350h4M70 351h4M63 352h3M67 352h3M59 353h4M55 354h4M51 355h4M47 356h4M42 357h5M38 358h4M34 359h4M30 360h4M26 361h4M23 362h3M514 364h2M516 365h3M519 366h4M70 367h1M523 367h3M70 368h1M84 368h2M526 368h1M81 369h3M529 369h1M77 370h4M87 370h1M511 370h1M530 370h3M74 371h3M87 371h1M511 371h1M533 371h4M73 372h1M88 372h1M510 372h1M537 372h3M88 373h1M120 373h1M478 373h1M510 373h1M540 373h3M120 374h1M478 374h1M543 374h3M121 375h1M477 375h1M546 375h3M121 376h1M477 376h1M549 376h4M122 377h1M476 377h1M553 377h3M122 378h1M476 378h1M556 378h3M123 379h1M475 379h1M559 379h3M123 380h1M475 380h1M562 380h4M124 381h1M474 381h1M566 381h3M75 382h1M124 382h1M474 382h1M523 382h1M569 382h1M75 383h1M125 383h1M473 383h1M508 383h1M523 383h1M125 384h1M473 384h1M509 384h2M92 385h1M126 385h1M472 385h1M506 385h1M511 385h3M91 386h2M126 386h1M472 386h1M506 386h1M514 386h3M77 387h1M89 387h2M93 387h1M127 387h1M471 387h1M505 387h1M517 387h2M521 387h1M77 388h1M87 388h2M93 388h1M127 388h1M471 388h1M505 388h1M519 388h1M521 388h1M78 389h1M85 389h2M94 389h1M128 389h1M470 389h1M504 389h1M78 390h1M83 390h2M94 390h1M128 390h1M470 390h1M504 390h1M79 391h1M81 391h2M95 391h1M127 391h1M129 391h1M469 391h1M503 391h1M519 391h1M79 392h1M95 392h1M125 392h2M129 392h1M469 392h1M503 392h1M519 392h1M96 393h1M123 393h2M130 393h1M468 393h1M502 393h1M518 393h1M96 394h1M121 394h2M130 394h1M468 394h1M502 394h1M518 394h1M97 395h1M119 395h2M131 395h1M467 395h1M501 395h1M97 396h1M117 396h2M131 396h1M467 396h1M501 396h1M98 397h1M115 397h2M132 397h1M466 397h1M500 397h1M33 398h1M82 398h1M98 398h1M113 398h2M132 398h1M466 398h1M500 398h1M516 398h1M565 398h1M33 399h1M82 399h1M99 399h1M111 399h2M133 399h1M465 399h1M516 399h1M565 399h1M34 400h1M83 400h1M99 400h1M109 400h2M134 400h1M417 400h1M464 400h1M515 400h1M564 400h1M34 401h1M83 401h1M100 401h1M107 401h2M134 401h1M418 401h1M464 401h1M498 401h1M515 401h1M564 401h1M35 402h1M84 402h1M100 402h1M105 402h2M135 402h1M419 402h1M463 402h1M498 402h1M500 402h2M514 402h1M563 402h1M35 403h1M84 403h1M101 403h1M103 403h2M136 403h1M420 403h1M462 403h1M497 403h1M502 403h2M514 403h1M563 403h1M85 404h1M101 404h1M136 404h1M421 404h2M462 404h1M497 404h1M504 404h2M513 404h1M85 405h1M99 405h2M137 405h1M423 405h1M461 405h1M496 405h1M506 405h2M513 405h1M86 406h1M97 406h2M137 406h1M424 406h1M461 406h1M496 406h1M508 406h2M512 406h1M37 407h1M86 407h1M95 407h2M103 407h1M138 407h1M425 407h1M460 407h1M495 407h1M510 407h1M512 407h1M561 407h1M37 408h1M87 408h1M93 408h2M103 408h1M139 408h1M426 408h1M459 408h1M495 408h1M561 408h1M38 409h1M87 409h1M91 409h2M104 409h1M139 409h1M459 409h1M494 409h1M560 409h1M38 410h1M88 410h3M104 410h1M140 410h1M458 410h1M494 410h1M510 410h1M560 410h1M39 411h1M88 411h1M105 411h1M141 411h1M457 411h1M493 411h1M510 411h1M559 411h1M39 412h1M89 412h1M106 412h1M141 412h1M457 412h1M492 412h1M509 412h1M559 412h1M89 413h1M106 413h1M142 413h1M456 413h1M492 413h1M509 413h1M90 414h1M107 414h1M143 414h1M194 414h1M455 414h1M491 414h1M508 414h1M90 415h1M108 415h1M144 415h1M193 415h1M454 415h1M490 415h1M508 415h1M41 416h1M91 416h1M108 416h1M144 416h1M192 416h1M454 416h1M490 416h1M507 416h1M557 416h1M41 417h1M91 417h1M109 417h1M145 417h1M191 417h1M453 417h1M489 417h1M507 417h1M557 417h1M42 418h1M92 418h1M110 418h1M146 418h1M190 418h1M399 418h1M452 418h1M488 418h1M490 418h1M506 418h1M556 418h1M42 419h1M93 419h1M110 419h1M147 419h1M189 419h1M400 419h1M451 419h1M488 419h1M491 419h2M505 419h1M556 419h1M43 420h1M93 420h1M111 420h1M148 420h1M188 420h1M401 420h1M450 420h1M487 420h1M493 420h1M505 420h1M555 420h1M43 421h1M94 421h1M111 421h1M149 421h1M187 421h1M402 421h1M450 421h1M487 421h1M494 421h2M504 421h1M555 421h1M94 422h1M109 422h2M112 422h1M149 422h1M186 422h1M403 422h1M449 422h1M451 422h1M486 422h1M496 422h2M504 422h1M95 423h1M108 423h1M112 423h1M150 423h1M403 423h1M448 423h1M452 423h2M486 423h1M498 423h1M503 423h1M95 424h1M106 424h2M113 424h1M151 424h1M404 424h1M447 424h1M454 424h1M485 424h1M499 424h2M503 424h1M45 425h1M96 425h1M105 425h1M114 425h1M152 425h1M405 425h1M446 425h1M455 425h1M484 425h1M502 425h1M553 425h1M45 426h1M97 426h1M103 426h2M115 426h1M153 426h1M406 426h1M445 426h1M456 426h2M483 426h1M553 426h1M46 427h1M97 427h1M102 427h1M116 427h1M153 427h1M407 427h1M445 427h1M458 427h1M482 427h1M552 427h1M46 428h1M98 428h1M100 428h2M116 428h1M154 428h1M444 428h1M459 428h1M482 428h1M500 428h1M552 428h1M47 429h1M99 429h1M117 429h1M155 429h1M443 429h1M460 429h1M481 429h1M499 429h1M551 429h1M47 430h1M100 430h1M118 430h1M156 430h1M442 430h1M461 430h2M480 430h1M498 430h1M551 430h1M48 431h1M100 431h1M119 431h1M157 431h1M441 431h1M463 431h1M479 431h1M498 431h1M550 431h1M48 432h1M101 432h1M119 432h1M158 432h1M440 432h1M464 432h1M479 432h1M497 432h1M550 432h1M49 433h1M102 433h1M120 433h1M159 433h1M439 433h1M465 433h1M478 433h1M496 433h1M549 433h1M49 434h1M102 434h1M121 434h1M160 434h1M438 434h1M466 434h2M477 434h2M496 434h1M549 434h1M50 435h1M103 435h1M161 435h1M437 435h1M468 435h1M476 435h1M479 435h2M495 435h1M548 435h1M50 436h1M104 436h1M162 436h1M436 436h1M469 436h1M476 436h1M481 436h1M494 436h1M548 436h1M51 437h1M105 437h1M123 437h1M163 437h1M435 437h1M470 437h2M475 437h1M482 437h1M493 437h1M547 437h1M51 438h1M105 438h1M121 438h1M124 438h1M164 438h1M434 438h1M472 438h1M474 438h1M483 438h2M493 438h1M547 438h1M52 439h1M106 439h1M119 439h2M125 439h1M165 439h1M366 439h1M433 439h1M473 439h1M485 439h1M492 439h1M546 439h1M52 440h1M107 440h1M118 440h1M126 440h1M166 440h1M366 440h1M432 440h1M472 440h1M486 440h1M491 440h1M546 440h1M53 441h1M107 441h1M117 441h1M126 441h1M167 441h1M367 441h1M431 441h1M472 441h1M487 441h2M491 441h1M545 441h1M54 442h1M108 442h1M116 442h1M127 442h1M168 442h1M367 442h1M430 442h1M471 442h1M489 442h2M544 442h1M54 443h1M109 443h1M115 443h1M128 443h1M169 443h1M368 443h1M429 443h1M470 443h1M489 443h1M544 443h1M55 444h1M110 444h1M113 444h2M129 444h1M170 444h1M368 444h1M428 444h1M469 444h1M488 444h1M543 444h1M56 445h1M110 445h1M112 445h1M130 445h1M171 445h2M369 445h1M426 445h2M468 445h1M488 445h1M542 445h1M56 446h1M111 446h1M131 446h1M173 446h1M369 446h1M425 446h1M467 446h1M487 446h1M542 446h1M57 447h1M112 447h1M131 447h1M174 447h1M370 447h1M424 447h1M467 447h1M486 447h1M541 447h1M57 448h1M113 448h1M132 448h1M175 448h1M370 448h1M423 448h1M466 448h1M485 448h1M541 448h1M58 449h1M114 449h1M133 449h1M176 449h1M371 449h1M421 449h2M465 449h2M484 449h1M540 449h1M59 450h1M114 450h1M134 450h1M177 450h2M335 450h1M371 450h1M420 450h1M464 450h1M467 450h1M484 450h1M539 450h1M59 451h1M115 451h1M135 451h1M179 451h1M335 451h1M419 451h1M463 451h1M468 451h1M483 451h1M539 451h1M60 452h1M116 452h1M135 452h2M180 452h1M418 452h1M462 452h1M469 452h1M482 452h1M538 452h1M61 453h1M117 453h1M134 453h1M137 453h1M180 453h2M417 453h1M461 453h1M470 453h1M481 453h1M537 453h1M61 454h1M118 454h1M133 454h1M138 454h1M179 454h1M182 454h2M415 454h2M460 454h1M471 454h2M480 454h1M537 454h1M62 455h1M119 455h1M132 455h1M139 455h1M179 455h1M184 455h1M414 455h1M459 455h1M473 455h1M479 455h1M536 455h1M63 456h1M119 456h1M130 456h2M140 456h1M178 456h1M185 456h1M413 456h1M458 456h1M474 456h1M479 456h1M535 456h1M63 457h1M120 457h1M129 457h1M141 457h1M177 457h1M186 457h2M411 457h2M457 457h1M475 457h1M478 457h1M535 457h1M64 458h1M121 458h1M128 458h1M142 458h1M176 458h1M188 458h1M410 458h1M456 458h1M476 458h2M534 458h1M65 459h1M122 459h1M127 459h1M143 459h1M176 459h1M189 459h2M408 459h2M455 459h1M476 459h1M533 459h1M65 460h1M123 460h1M126 460h1M144 460h1M175 460h1M191 460h1M407 460h1M454 460h1M475 460h1M533 460h1M66 461h1M124 461h1M145 461h1M174 461h1M192 461h2M405 461h2M453 461h1M474 461h1M532 461h1M67 462h1M124 462h1M146 462h1M173 462h1M194 462h2M403 462h2M452 462h1M473 462h1M531 462h1M67 463h1M123 463h1M147 463h1M173 463h1M196 463h1M402 463h1M451 463h2M473 463h1M531 463h1M68 464h1M122 464h1M126 464h1M148 464h1M172 464h1M197 464h2M400 464h2M450 464h1M453 464h1M472 464h1M530 464h1M68 465h1M121 465h1M127 465h1M149 465h1M171 465h1M199 465h1M399 465h1M449 465h1M454 465h1M471 465h1M530 465h1M69 466h1M120 466h1M128 466h1M149 466h2M170 466h1M200 466h2M397 466h2M448 466h1M455 466h1M470 466h1M529 466h1M70 467h1M119 467h1M129 467h1M148 467h1M151 467h1M170 467h1M202 467h1M395 467h2M446 467h2M456 467h1M469 467h1M528 467h1M71 468h1M118 468h1M130 468h1M147 468h1M152 468h2M169 468h1M203 468h2M393 468h2M445 468h1M457 468h1M468 468h1M527 468h1M71 469h1M116 469h2M131 469h1M146 469h1M154 469h1M168 469h1M205 469h2M391 469h2M444 469h1M457 469h1M467 469h1M527 469h1M72 470h1M115 470h1M132 470h1M145 470h1M155 470h1M167 470h1M207 470h2M389 470h2M443 470h1M458 470h1M466 470h1M526 470h1M73 471h1M114 471h1M133 471h1M144 471h1M156 471h1M167 471h1M209 471h2M387 471h2M442 471h1M459 471h1M465 471h1M525 471h1M74 472h1M113 472h1M134 472h1M144 472h1M157 472h1M166 472h1M211 472h2M385 472h2M440 472h2M460 472h1M464 472h1M524 472h1M74 473h1M112 473h1M135 473h1M143 473h1M158 473h2M165 473h1M213 473h2M383 473h2M439 473h1M461 473h3M524 473h1M75 474h1M111 474h1M136 474h2M142 474h1M160 474h1M164 474h1M215 474h2M381 474h2M438 474h1M461 474h2M523 474h1M76 475h1M110 475h1M138 475h1M141 475h1M161 475h1M164 475h1M217 475h2M379 475h2M437 475h1M460 475h1M463 475h1M522 475h1M77 476h1M109 476h1M139 476h2M162 476h2M219 476h3M377 476h2M435 476h3M459 476h1M464 476h1M521 476h1M78 477h1M108 477h1M140 477h1M164 477h1M222 477h2M375 477h2M434 477h1M438 477h1M458 477h1M465 477h1M520 477h1M79 478h1M107 478h1M141 478h1M164 478h2M224 478h2M373 478h2M433 478h1M439 478h1M457 478h1M466 478h1M519 478h1M80 479h1M106 479h1M142 479h2M163 479h1M166 479h2M226 479h3M370 479h3M431 479h2M439 479h1M455 479h2M467 479h1M518 479h1M81 480h1M105 480h1M144 480h1M163 480h1M168 480h1M229 480h3M367 480h3M430 480h1M440 480h1M454 480h1M468 480h1M517 480h1M82 481h1M104 481h1M145 481h1M162 481h1M169 481h1M232 481h3M364 481h3M429 481h1M441 481h1M453 481h1M469 481h1M516 481h1M83 482h1M103 482h1M146 482h1M161 482h1M170 482h1M235 482h3M361 482h3M427 482h2M442 482h1M452 482h1M470 482h1M515 482h1M84 483h1M102 483h1M147 483h1M160 483h1M171 483h2M238 483h3M358 483h3M426 483h1M443 483h1M451 483h1M470 483h1M514 483h1M84 484h1M100 484h2M148 484h1M160 484h1M173 484h1M241 484h4M354 484h4M425 484h1M444 484h1M449 484h2M471 484h1M514 484h1M85 485h1M99 485h1M149 485h2M159 485h1M174 485h1M245 485h3M353 485h1M424 485h1M444 485h1M448 485h1M472 485h1M513 485h1M86 486h1M98 486h1M151 486h1M158 486h1M175 486h2M248 486h3M348 486h3M422 486h2M445 486h1M447 486h1M473 486h1M512 486h1M87 487h1M97 487h1M152 487h1M157 487h1M177 487h2M251 487h3M345 487h3M420 487h2M446 487h1M474 487h1M511 487h1M87 488h1M96 488h1M153 488h2M157 488h1M179 488h2M254 488h2M257 488h1M341 488h4M418 488h2M422 488h1M444 488h2M475 488h1M511 488h1M88 489h1M95 489h1M155 489h2M181 489h1M258 489h5M336 489h5M417 489h1M422 489h1M443 489h1M476 489h1M510 489h1M89 490h1M94 490h1M156 490h1M180 490h1M182 490h2M263 490h6M329 490h7M415 490h2M423 490h1M442 490h1M477 490h1M509 490h1M90 491h1M93 491h1M157 491h2M179 491h1M184 491h1M269 491h7M323 491h6M414 491h1M424 491h1M440 491h2M478 491h1M508 491h1M91 492h2M159 492h1M179 492h1M185 492h2M276 492h7M316 492h7M412 492h2M424 492h1M439 492h1M479 492h1M507 492h1M92 493h1M160 493h2M178 493h1M187 493h1M283 493h33M411 493h1M425 493h1M437 493h2M480 493h1M506 493h1M93 494h1M162 494h1M177 494h1M188 494h2M409 494h2M426 494h1M436 494h1M481 494h1M505 494h1M94 495h1M163 495h1M177 495h1M190 495h2M407 495h2M426 495h1M435 495h1M482 495h1M504 495h1M95 496h1M164 496h2M176 496h1M192 496h2M405 496h2M427 496h1M433 496h2M483 496h1M503 496h1M96 497h1M166 497h1M176 497h1M194 497h2M403 497h2M428 497h1M432 497h1M484 497h1M502 497h1M97 498h1M167 498h2M175 498h1M196 498h2M401 498h2M405 498h1M428 498h1M430 498h2M485 498h1M501 498h1M98 499h1M169 499h1M174 499h1M197 499h3M399 499h2M405 499h1M429 499h1M485 499h1M500 499h1M99 500h1M170 500h1M174 500h1M196 500h1M200 500h2M397 500h2M406 500h1M428 500h1M486 500h1M499 500h1M100 501h1M171 501h3M196 501h1M202 501h2M395 501h2M406 501h1M426 501h2M487 501h1M498 501h1M101 502h1M173 502h1M195 502h1M204 502h2M393 502h2M407 502h1M425 502h1M488 502h1M497 502h1M102 503h1M174 503h2M195 503h1M206 503h2M391 503h2M407 503h1M423 503h2M489 503h1M496 503h1M103 504h1M176 504h2M194 504h1M208 504h2M389 504h2M408 504h1M421 504h2M490 504h1M495 504h1M104 505h1M178 505h2M194 505h1M210 505h2M387 505h2M408 505h1M419 505h2M491 505h1M494 505h1M105 506h1M180 506h1M193 506h1M212 506h2M385 506h2M409 506h1M418 506h1M492 506h2M106 507h1M181 507h2M193 507h1M214 507h3M381 507h4M387 507h1M409 507h1M416 507h2M492 507h1M107 508h1M183 508h2M192 508h1M215 508h1M217 508h4M377 508h4M387 508h1M414 508h2M491 508h1M108 509h1M185 509h2M192 509h1M214 509h1M221 509h4M374 509h3M388 509h1M412 509h2M490 509h1M109 510h1M187 510h1M214 510h1M225 510h2M372 510h2M388 510h1M411 510h1M489 510h1M110 511h1M188 511h2M227 511h2M370 511h2M389 511h1M408 511h2M487 511h2M111 512h2M190 512h1M229 512h3M366 512h2M369 512h1M389 512h1M406 512h2M486 512h1M113 513h1M192 513h2M232 513h2M235 513h1M362 513h4M390 513h1M404 513h2M485 513h1M114 514h1M194 514h3M236 514h4M360 514h2M390 514h1M402 514h2M483 514h2M115 515h2M197 515h2M240 515h4M355 515h4M391 515h1M400 515h2M482 515h1M117 516h1M199 516h2M244 516h3M351 516h4M391 516h1M398 516h2M481 516h1M118 517h1M201 517h2M211 517h1M247 517h2M250 517h1M347 517h2M350 517h1M395 517h3M480 517h1M119 518h1M203 518h2M211 518h1M251 518h2M254 518h1M343 518h4M393 518h2M479 518h1M120 519h1M205 519h2M255 519h4M339 519h4M391 519h1M478 519h1M121 520h1M207 520h2M259 520h6M334 520h5M389 520h2M477 520h1M122 521h1M209 521h1M211 521h1M265 521h7M326 521h4M331 521h3M387 521h2M476 521h1M123 522h1M212 522h2M273 522h15M311 522h15M384 522h3M475 522h1M124 523h1M214 523h3M288 523h4M293 523h17M382 523h2M474 523h1M125 524h1M217 524h3M379 524h3M472 524h2M126 525h2M220 525h4M372 525h1M375 525h4M471 525h1M128 526h1M224 526h3M372 526h3M470 526h1M129 527h1M227 527h2M369 527h3M468 527h2M130 528h2M229 528h1M231 528h1M367 528h2M467 528h1M132 529h1M229 529h1M232 529h4M363 529h4M466 529h1M133 530h2M236 530h4M359 530h4M464 530h2M135 531h1M240 531h4M354 531h5M462 531h2M136 532h2M244 532h4M350 532h2M353 532h1M461 532h1M138 533h2M248 533h2M251 533h3M344 533h6M459 533h2M140 534h1M254 534h6M338 534h6M458 534h1M141 535h2M260 535h4M334 535h4M456 535h2M143 536h1M264 536h6M328 536h4M333 536h1M455 536h1M144 537h2M271 537h16M312 537h16M453 537h2M146 538h1M287 538h4M292 538h19M452 538h1M147 539h2M450 539h2M149 540h1M449 540h1M150 541h2M447 541h2M152 542h1M445 542h2M153 543h2M444 543h1M155 544h2M442 544h2M157 545h1M441 545h1M158 546h2M439 546h2M160 547h2M437 547h2M162 548h2M435 548h2M164 549h2M433 549h2M166 550h2M431 550h2M168 551h2M429 551h2M170 552h2M427 552h2M172 553h2M425 553h2M174 554h3M422 554h3M177 555h2M420 555h2M179 556h2M418 556h2M181 557h2M416 557h2M183 558h3M413 558h3M186 559h2M411 559h2M188 560h2M409 560h2M190 561h2M407 561h2M192 562h3M404 562h3M195 563h2M402 563h2M197 564h2M400 564h2M199 565h2M398 565h2M201 566h3M395 566h3M204 567h3M391 567h4M207 568h4M388 568h3M211 569h3M216 569h1M385 569h3M214 570h3M382 570h3M217 571h3M379 571h3M220 572h3M376 572h3M223 573h3M372 573h4M226 574h4M369 574h3M230 575h4M365 575h4M234 576h4M361 576h1M363 576h2M238 577h5M356 577h5M243 578h5M351 578h5M248 579h7M343 579h8M255 580h10M333 580h10M265 581h10M323 581h10M275 582h10M313 582h10M285 583h28"/>
<path transform="translate(.5,0)" stroke="#ffffff" d="M15 285v28M16 275v10M16 313v10M17 265v10M17 323v10M18 255v10M18 333v10M19 248v7M19 343v8M20 243v5M20 351v5M21 238v5M21 356v5M22 234v4M22 361v4M23 230v4M23 365v4M24 226v4M24 369v3M25 223v3M25 372v4M26 220v3M26 376v3M27 217v3M27 379v3M28 214v3M28 382v3M29 211v3M29 385v3M30 207v4M30 388v3M31 204v3M31 391v4M32 201v3M32 395v3M36 192v3M36 404v3M40 183v3M40 413v3M44 174v3M44 422v3M60 287v24M61 270v17M61 311v17M62 264v7M62 328v6M63 260v4M63 334v4M64 254v6M64 338v6M65 248v6M65 344v6M66 244v4M66 350v4M67 240v4M67 354v5M68 236v4M68 359v4M69 232v4M69 363v4M70 229v3M71 369v3M72 224v3M72 372v3M73 220v4M73 375v4M74 217v3M74 379v3M75 214v3M75 288v23M76 272v16M76 310v16M76 384v3M77 209v3M77 265v7M77 326v8M78 259v6M78 334v5M79 255v4M79 339v4M80 251v4M80 343v4M80 392v3M81 247v4M81 347v4M81 395v3M82 244v3M82 351v4M83 240v4M83 355v4M84 194v3M84 236v4M84 359v3M85 232v4M85 362v4M86 229v3M86 366v4M89 221v4M89 374v3M90 217v4M90 377v4M91 214v3M91 381v4M97 171v3M99 197v3M102 404v3M105 283v33M106 276v7M106 316v7M107 269v7M107 323v6M108 263v6M108 329v7M109 258v5M109 336v5M110 254v4M110 341v4M111 251v3M111 345v3M112 248v3M112 348v3M113 245v3M113 351v3M114 241v4M114 354v4M115 238v3M115 358v3M116 235v3M116 361v3M117 232v3M117 364v3M118 229v3M118 367v3M119 226v3M119 370v3M122 219v3M122 435v3M125 461v3M191 510v3M210 519v3M212 514v3M213 511v3M217 566v3M218 562v4M219 559v3M220 556v3M221 553v3M222 549v4M223 546v3M224 543v3M225 540v3M226 537v3M227 74v3M227 533v4M228 77v4M228 530v3M229 81v3M230 84v3M230 526v3M231 523v3M232 519v4M233 516v3M234 513v3M236 22v4M237 26v4M238 30v4M239 34v4M240 38v4M240 86v4M241 42v5M241 90v4M242 47v4M242 94v4M243 51v4M243 98v4M244 55v4M244 102v4M245 59v4M245 106v4M246 63v7M246 110v4M247 70v4M248 74v4M249 78v4M249 515v3M250 511v4M250 530v4M251 507v4M251 526v4M252 503v4M252 522v4M253 499v4M253 518v4M254 495v4M255 491v4M256 488v3M266 62v5M267 67v6M268 73v5M270 533v5M271 526v7M272 522v4M287 60v8M288 68v8M291 531v8M292 523v8M306 68v8M307 60v8M310 522v8M311 530v8M326 73v5M327 66v7M328 62v4M330 521v5M331 526v6M332 532v5M334 145v3M335 139v6M336 136v3M336 452v4M337 456v4M338 460v3M342 107v4M343 103v4M344 99v4M345 77v4M345 95v4M346 73v4M346 91v4M347 69v4M347 87v4M348 65v4M348 83v4M349 517v4M350 521v4M351 525v4M352 485v3M352 529v7M353 488v4M353 536v4M354 492v4M354 540v4M355 496v4M355 544v4M356 500v4M356 548v4M357 504v4M357 552v5M358 508v4M358 557v4M359 512v3M359 561v4M360 565v4M361 569v4M362 573v4M364 83v3M365 80v3M366 76v4M367 73v3M368 70v3M368 512v3M369 69v3M369 515v3M370 66v3M370 518v4M371 62v4M371 522v3M372 59v3M373 56v3M374 53v3M375 49v4M376 46v3M377 43v3M378 40v3M379 37v3M380 33v4M381 30v3M385 85v3M386 82v3M388 77v3M392 517v3M401 98v3M410 508v3M476 161v3M476 219v3M479 226v3M479 370v3M480 229v3M480 367v3M481 232v3M481 364v3M482 235v3M482 361v3M483 238v3M483 358v3M484 241v4M484 354v4M485 245v3M485 351v3M486 248v3M486 348v3M487 251v3M487 345v3M488 254v4M488 341v4M489 258v5M489 336v5M490 263v6M490 329v7M491 269v7M491 323v6M492 276v7M492 316v7M493 283v33M496 192v3M499 399v3M501 425v3M507 214v3M507 381v4M508 217v4M508 377v4M509 221v4M509 374v3M511 407v3M512 229v3M512 366v4M513 232v4M513 362v4M514 194v3M514 236v4M514 359v3M515 240v4M515 355v4M516 244v3M516 351v4M517 247v4M517 347v4M517 395v3M518 251v4M518 343v4M519 255v4M519 339v4M520 259v6M520 334v5M520 388v3M521 209v3M521 265v7M521 326v8M522 272v16M522 310v17M522 384v3M523 214v3M523 288v22M524 217v3M524 379v3M525 220v4M525 375v4M526 224v3M526 372v3M527 368v4M528 229v3M528 367v3M529 232v4M529 363v4M530 236v4M530 359v4M531 240v4M531 354v5M532 244v4M532 350v4M533 248v6M533 344v6M534 254v6M534 338v6M535 260v4M535 334v4M536 264v6M536 328v6M537 270v18M537 311v17M538 287v24M554 174v3M554 422v3M558 183v3M558 413v3M562 192v3M562 404v3M566 201v3M566 395v3M567 204v3M567 391v4M568 207v4M568 388v3M569 211v3M569 385v3M570 214v3M570 382v3M571 217v3M571 379v3M572 220v3M572 376v3M573 223v3M573 372v4M574 226v4M574 369v3M575 230v4M575 365v4M576 234v4M576 361v4M577 238v5M577 356v5M578 243v5M578 351v5M579 248v7M579 343v8M580 255v10M580 333v10M581 265v10M581 323v10M582 275v10M582 313v10M583 285v28"/>
<text class="wt hn c-red" transform="translate(97.274,355) scale(0.86,1)" x="0" y="0">1</text>
<text class="wt hn c-yellow" transform="translate(140.274,439) scale(0.86,1)" x="0" y="0">2</text>
<text class="wt hn c-green" transform="translate(211.274,494) scale(0.86,1)" x="0" y="0">3</text>
<text class="wt hn c-blue" transform="translate(305.274,514) scale(0.86,1)" x="0" y="0">4</text>
<text class="wt hn c-red" transform="translate(415.274,479) scale(0.86,1)" x="0" y="0">5</text>
<text class="wt hn c-yellow" transform="translate(498.274,374) scale(0.86,1)" x="0" y="0">6</text>
<text class="wt hn c-green" transform="translate(503.274,253) scale(0.86,1)" x="0" y="0">7</text>
<text class="wt hn c-blue" transform="translate(460.274,169) scale(0.86,1)" x="0" y="0">8</text>
<text class="wt hn c-red" transform="translate(389.274,114) scale(0.86,1)" x="0" y="0">9</text>
<text class="wt hn c-yellow" transform="translate(295.274,94) scale(0.86,1)" x="0" y="0">10</text>
<text class="wt hn c-green" transform="translate(185.274,129) scale(0.86,1)" x="0" y="0">11</text>
<text class="wt hn c-blue" transform="translate(102.274,234) scale(0.86,1)" x="0" y="0">12</text>
<text class="ax c-yellow" transform="translate(340.38,133) scale(0.44,1)" x="0" y="0" style="letter-spacing:4px;stroke:#ffff00;stroke-width:0;vector-effect:non-scaling-stroke">MC</text>
<text class="ax c-red" transform="translate(120.407,308) scale(0.33,1)" x="0" y="0" style="letter-spacing:5.5px;stroke:#ff0000;stroke-width:0.3;vector-effect:non-scaling-stroke">Asc</text>
</svg>
<div id="side">
<div style="top:6px"><span class="c-white">Astrolog 5.40</span></div>
<div style="top:16px">"B"</div>
<div style="top:26px">Wed August 23, 1989</div>
<div style="top:36px">10:13pm (ST +8:00 GMT)</div>
<div style="top:46px">"               "</div>
<div style="top:56px">121°18E 24°59N</div>
<div style="top:66px">Placidus houses.</div>
<div style="top:76px">Tropical, Geocentric.</div>
<div style="top:86px">Julian Day = 2447762.0924</div>
<div style="top:106px"><span class="c-red"> 1st house: </span><span class="c-yellow">17Tau01</span></div>
<div style="top:116px"><span class="c-yellow"> 2nd house: </span><span class="c-green">15Gem08</span></div>
<div style="top:126px"><span class="c-green"> 3rd house: </span><span class="c-blue"> 9Can24</span></div>
<div style="top:136px"><span class="c-blue"> 4th house: </span><span class="c-red"> 4Leo04</span></div>
<div style="top:146px"><span class="c-red"> 5th house: </span><span class="c-yellow"> 2Vir48</span></div>
<div style="top:156px"><span class="c-yellow"> 6th house: </span><span class="c-green"> 8Lib03</span></div>
<div style="top:166px"><span class="c-green"> 7th house: </span><span class="c-blue">17Sco01</span></div>
<div style="top:176px"><span class="c-blue"> 8th house: </span><span class="c-red">15Sag08</span></div>
<div style="top:186px"><span class="c-red"> 9th house: </span><span class="c-yellow"> 9Cap24</span></div>
<div style="top:196px"><span class="c-yellow">10th house: </span><span class="c-green"> 4Aqu04</span></div>
<div style="top:206px"><span class="c-green">11th house: </span><span class="c-blue"> 2Pis48</span></div>
<div style="top:216px"><span class="c-blue">12th house: </span><span class="c-red"> 8Ari03</span></div>
<div style="top:236px"><span class="c-red"> Sun: </span><span class="c-yellow"> 0Vir25</span><span class="c-white"> </span> - 0°00'</div>
<div style="top:246px"><span class="c-blue">Moon: </span><span class="c-yellow">27Tau59</span><span class="c-white"> </span> + 5°17'</div>
<div style="top:256px"><span class="c-green">Merc: </span><span class="c-yellow">26Vir58</span><span class="c-white"> </span> - 1°21'</div>
<div style="top:266px"><span class="c-green">Venu: </span><span class="c-green"> 6Lib33</span><span class="c-white"> </span> + 0°31'</div>
<div style="top:276px"><span class="c-red">Mars: </span><span class="c-yellow">12Vir41</span><span class="c-white"> </span> + 1°00'</div>
<div style="top:286px"><span class="c-red">Jupi: </span><span class="c-blue"> 4Can29</span><span class="c-white"> </span> - 0°19'</div>
<div style="top:296px"><span class="c-yellow">Satu: </span><span class="c-yellow"> 7Cap35</span><span class="c-white">R</span> + 0°32'</div>
<div style="top:306px"><span class="c-green">Uran: </span><span class="c-yellow"> 1Cap28</span><span class="c-white">R</span> - 0°16'</div>
<div style="top:316px"><span class="c-blue">Nept: </span><span class="c-yellow"> 9Cap50</span><span class="c-white">R</span> + 0°55'</div>
<div style="top:326px"><span class="c-blue">Plut: </span><span class="c-blue">12Sco39</span><span class="c-white"> </span> +15°32'</div>
<div style="top:336px"><span class="c-dkcyan">Node: </span><span class="c-green">25Aqu22</span><span class="c-white">R</span> + 0°00'</div>
<div style="top:356px">Fire: 0, Earth: 8,</div>
<div style="top:366px">Air : 3, Water: 2</div>
<div style="top:376px">Car: 5, Fix: 5, Mut: 3</div>
<div style="top:386px">Yang: 3, Yin: 10</div>
<div style="top:396px">M: 4, N: 7, A: 3, D: 8</div>
<div style="top:406px">Ang: 3, Suc: 6, Cad: 2</div>
<div style="top:416px">Learn: 6, Share: 7</div>
</div>
</div>
</body>
</html>
